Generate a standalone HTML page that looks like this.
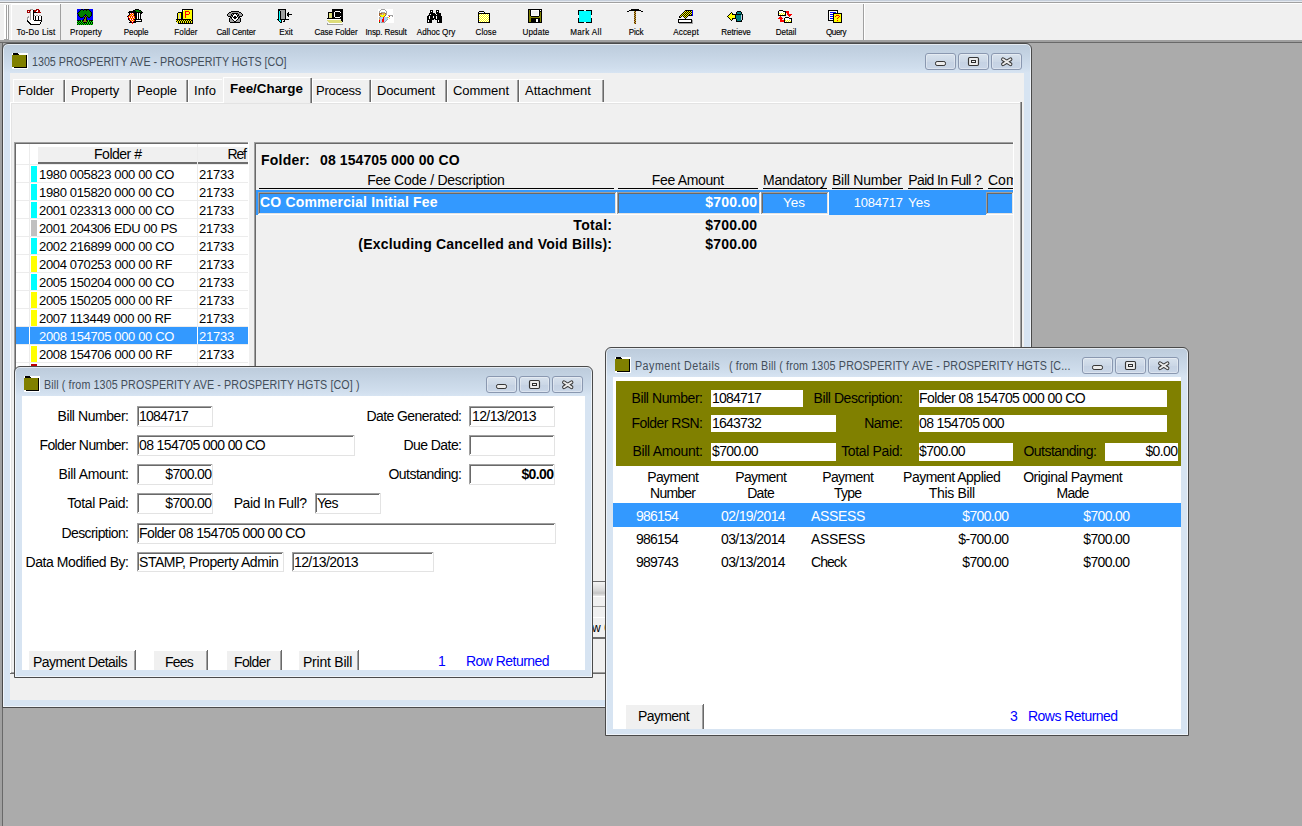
<!DOCTYPE html><html><head><meta charset="utf-8"><style>
html,body{margin:0;padding:0}
body{width:1302px;height:826px;position:relative;overflow:hidden;background:#ababab;font-family:"Liberation Sans",sans-serif}
.a{position:absolute}
.t{position:absolute;white-space:pre;font-family:"Liberation Sans",sans-serif}
.win{box-shadow:inset 0 0 0 1px rgba(255,255,255,0.6);border:1px solid #4a4a4a;border-radius:6px 6px 0 0;background:linear-gradient(#bccbdb 0px,#c4d3e3 10px,#d0deed 24px,#d7e4f2 29px,#d7e4f2 100%)}
.tbtn{box-sizing:border-box;width:31px;height:17px;border:1px solid #8a98b0;border-radius:3px;background:linear-gradient(#d8e2ed,#cbd7e6 50%,#c5d2e3 52%,#c9d6e7);box-shadow:inset 0 0 0 1px rgba(255,255,255,0.35)}
</style></head><body>

<div class="a" style="left:0px;top:0px;width:1302px;height:1px;background:#c5ceda;"></div>
<div class="a" style="left:0px;top:1px;width:1302px;height:1px;background:#e6eaf0;"></div>
<div class="a" style="left:0px;top:2px;width:1302px;height:1px;background:#a0a0a0;"></div>
<div class="a" style="left:0px;top:3px;width:1302px;height:37px;background:#f0f0f0;"></div>
<div class="a" style="left:0px;top:3px;width:1302px;height:1px;background:#ffffff;"></div>
<div class="a" style="left:0px;top:40px;width:1302px;height:2px;background:#a0a0a0;"></div>
<div class="a" style="left:0px;top:42px;width:1302px;height:1px;background:#696969;"></div>
<div class="a" style="left:4px;top:5px;width:2px;height:34px;background:#fff;"></div>
<div class="a" style="left:6px;top:5px;width:1px;height:34px;background:#a0a0a0;"></div>
<div class="a" style="left:7px;top:5px;width:1px;height:34px;background:#fff;"></div>
<div class="a" style="left:8px;top:5px;width:1px;height:34px;background:#a0a0a0;"></div>
<div class="a" style="left:4px;top:39px;width:5px;height:1px;background:#a0a0a0;"></div>
<div class="a" style="left:11px;top:4px;width:50px;height:1px;background:#fff;"></div>
<div class="a" style="left:11px;top:4px;width:1px;height:36px;background:#fff;"></div>
<div class="a" style="left:60px;top:4px;width:1px;height:37px;background:#a0a0a0;"></div>
<div class="a" style="left:11px;top:40px;width:50px;height:1px;background:#a0a0a0;"></div>
<div class="a" style="left:863px;top:4px;width:1px;height:36px;background:#a0a0a0;"></div>
<div class="a" style="left:864px;top:4px;width:1px;height:36px;background:#fff;"></div>
<div class="t" style="left:-263.833px;width:600px;text-align:center;top:27px;font-size:9.5px;line-height:9.5px;font-weight:normal;color:#000;letter-spacing:0.335px;transform:scaleX(0.85);transform-origin:50% 0;-webkit-text-stroke:0.15px #000;">To-Do List</div>
<div class="t" style="left:-213.901px;width:600px;text-align:center;top:27px;font-size:9.5px;line-height:9.5px;font-weight:normal;color:#000;letter-spacing:0.198px;transform:scaleX(0.85);transform-origin:50% 0;-webkit-text-stroke:0.15px #000;">Property</div>
<div class="t" style="left:-164.053px;width:600px;text-align:center;top:27px;font-size:9.5px;line-height:9.5px;font-weight:normal;color:#000;letter-spacing:-0.107px;transform:scaleX(0.85);transform-origin:50% 0;-webkit-text-stroke:0.15px #000;">People</div>
<div class="t" style="left:-113.964px;width:600px;text-align:center;top:27px;font-size:9.5px;line-height:9.5px;font-weight:normal;color:#000;letter-spacing:0.072px;transform:scaleX(0.85);transform-origin:50% 0;-webkit-text-stroke:0.15px #000;">Folder</div>
<div class="t" style="left:-64.063px;width:600px;text-align:center;top:27px;font-size:9.5px;line-height:9.5px;font-weight:normal;color:#000;letter-spacing:-0.126px;transform:scaleX(0.85);transform-origin:50% 0;-webkit-text-stroke:0.15px #000;">Call Center</div>
<div class="t" style="left:-13.989px;width:600px;text-align:center;top:27px;font-size:9.5px;line-height:9.5px;font-weight:normal;color:#000;letter-spacing:0.022px;transform:scaleX(0.85);transform-origin:50% 0;-webkit-text-stroke:0.15px #000;">Exit</div>
<div class="t" style="left:35.955px;width:600px;text-align:center;top:27px;font-size:9.5px;line-height:9.5px;font-weight:normal;color:#000;letter-spacing:-0.090px;transform:scaleX(0.85);transform-origin:50% 0;-webkit-text-stroke:0.15px #000;">Case Folder</div>
<div class="t" style="left:85.929px;width:600px;text-align:center;top:27px;font-size:9.5px;line-height:9.5px;font-weight:normal;color:#000;letter-spacing:-0.143px;transform:scaleX(0.85);transform-origin:50% 0;-webkit-text-stroke:0.15px #000;">Insp. Result</div>
<div class="t" style="left:136.018px;width:600px;text-align:center;top:27px;font-size:9.5px;line-height:9.5px;font-weight:normal;color:#000;letter-spacing:0.036px;transform:scaleX(0.85);transform-origin:50% 0;-webkit-text-stroke:0.15px #000;">Adhoc Qry</div>
<div class="t" style="left:186.025px;width:600px;text-align:center;top:27px;font-size:9.5px;line-height:9.5px;font-weight:normal;color:#000;letter-spacing:0.050px;transform:scaleX(0.85);transform-origin:50% 0;-webkit-text-stroke:0.15px #000;">Close</div>
<div class="t" style="left:236.101px;width:600px;text-align:center;top:27px;font-size:9.5px;line-height:9.5px;font-weight:normal;color:#000;letter-spacing:0.202px;transform:scaleX(0.85);transform-origin:50% 0;-webkit-text-stroke:0.15px #000;">Update</div>
<div class="t" style="left:286.218px;width:600px;text-align:center;top:27px;font-size:9.5px;line-height:9.5px;font-weight:normal;color:#000;letter-spacing:0.436px;transform:scaleX(0.85);transform-origin:50% 0;-webkit-text-stroke:0.15px #000;">Mark All</div>
<div class="t" style="left:335.902px;width:600px;text-align:center;top:27px;font-size:9.5px;line-height:9.5px;font-weight:normal;color:#000;letter-spacing:-0.197px;transform:scaleX(0.85);transform-origin:50% 0;-webkit-text-stroke:0.15px #000;">Pick</div>
<div class="t" style="left:386.086px;width:600px;text-align:center;top:27px;font-size:9.5px;line-height:9.5px;font-weight:normal;color:#000;letter-spacing:0.172px;transform:scaleX(0.85);transform-origin:50% 0;-webkit-text-stroke:0.15px #000;">Accept</div>
<div class="t" style="left:435.968px;width:600px;text-align:center;top:27px;font-size:9.5px;line-height:9.5px;font-weight:normal;color:#000;letter-spacing:-0.064px;transform:scaleX(0.85);transform-origin:50% 0;-webkit-text-stroke:0.15px #000;">Retrieve</div>
<div class="t" style="left:485.996px;width:600px;text-align:center;top:27px;font-size:9.5px;line-height:9.5px;font-weight:normal;color:#000;letter-spacing:-0.007px;transform:scaleX(0.85);transform-origin:50% 0;-webkit-text-stroke:0.15px #000;">Detail</div>
<div class="t" style="left:535.793px;width:600px;text-align:center;top:27px;font-size:9.5px;line-height:9.5px;font-weight:normal;color:#000;letter-spacing:-0.413px;transform:scaleX(0.85);transform-origin:50% 0;-webkit-text-stroke:0.15px #000;">Query</div>
<svg class="a" style="left:26px;top:8px" width="18" height="18" viewBox="0 0 18 18" shape-rendering="crispEdges"><rect x="4" y="1" width="3" height="1" fill="#a0a0a0"/><rect x="10" y="1" width="3" height="1" fill="#a00000"/><rect x="1" y="2" width="4" height="1" fill="#a00000"/><rect x="5" y="2" width="2" height="1" fill="#fff"/><rect x="7" y="2" width="1" height="1" fill="#000"/><rect x="8" y="2" width="3" height="1" fill="#a00000"/><rect x="11" y="2" width="1" height="1" fill="#fff"/><rect x="12" y="2" width="2" height="1" fill="#a00000"/><rect x="1" y="3" width="1" height="1" fill="#a00000"/><rect x="2" y="3" width="1" height="1" fill="#fff"/><rect x="3" y="3" width="1" height="1" fill="#a00000"/><rect x="4" y="3" width="1" height="1" fill="#a0a0a0"/><rect x="5" y="3" width="2" height="1" fill="#fff"/><rect x="7" y="3" width="1" height="1" fill="#000"/><rect x="8" y="3" width="2" height="1" fill="#a00000"/><rect x="10" y="3" width="2" height="1" fill="#fff"/><rect x="12" y="3" width="2" height="1" fill="#a00000"/><rect x="1" y="4" width="3" height="1" fill="#a00000"/><rect x="4" y="4" width="1" height="1" fill="#a0a0a0"/><rect x="5" y="4" width="2" height="1" fill="#fff"/><rect x="7" y="4" width="4" height="1" fill="#000"/><rect x="11" y="4" width="4" height="1" fill="#a00000"/><rect x="4" y="5" width="1" height="1" fill="#a0a0a0"/><rect x="5" y="5" width="2" height="1" fill="#fff"/><rect x="7" y="5" width="1" height="1" fill="#000"/><rect x="4" y="6" width="1" height="1" fill="#a0a0a0"/><rect x="5" y="6" width="2" height="1" fill="#fff"/><rect x="7" y="6" width="1" height="1" fill="#000"/><rect x="4" y="7" width="1" height="1" fill="#a0a0a0"/><rect x="5" y="7" width="2" height="1" fill="#fff"/><rect x="7" y="7" width="1" height="1" fill="#000"/><rect x="8" y="7" width="1" height="1" fill="#a0a0a0"/><rect x="9" y="7" width="1" height="1" fill="#fff"/><rect x="10" y="7" width="2" height="1" fill="#a0a0a0"/><rect x="12" y="7" width="1" height="1" fill="#fff"/><rect x="13" y="7" width="2" height="1" fill="#a0a0a0"/><rect x="2" y="8" width="1" height="1" fill="#a0a0a0"/><rect x="4" y="8" width="1" height="1" fill="#a0a0a0"/><rect x="5" y="8" width="2" height="1" fill="#fff"/><rect x="7" y="8" width="1" height="1" fill="#000"/><rect x="8" y="8" width="1" height="1" fill="#fff"/><rect x="9" y="8" width="1" height="1" fill="#000"/><rect x="10" y="8" width="2" height="1" fill="#fff"/><rect x="12" y="8" width="1" height="1" fill="#000"/><rect x="13" y="8" width="2" height="1" fill="#fff"/><rect x="15" y="8" width="1" height="1" fill="#000"/><rect x="1" y="9" width="2" height="1" fill="#a0a0a0"/><rect x="4" y="9" width="1" height="1" fill="#a0a0a0"/><rect x="5" y="9" width="2" height="1" fill="#fff"/><rect x="7" y="9" width="1" height="1" fill="#000"/><rect x="8" y="9" width="1" height="1" fill="#fff"/><rect x="9" y="9" width="1" height="1" fill="#000"/><rect x="10" y="9" width="2" height="1" fill="#fff"/><rect x="12" y="9" width="1" height="1" fill="#000"/><rect x="13" y="9" width="2" height="1" fill="#fff"/><rect x="15" y="9" width="1" height="1" fill="#000"/><rect x="1" y="10" width="1" height="1" fill="#a0a0a0"/><rect x="2" y="10" width="1" height="1" fill="#fff"/><rect x="4" y="10" width="1" height="1" fill="#a0a0a0"/><rect x="5" y="10" width="2" height="1" fill="#fff"/><rect x="7" y="10" width="1" height="1" fill="#000"/><rect x="8" y="10" width="1" height="1" fill="#fff"/><rect x="9" y="10" width="1" height="1" fill="#000"/><rect x="10" y="10" width="2" height="1" fill="#fff"/><rect x="12" y="10" width="1" height="1" fill="#000"/><rect x="13" y="10" width="2" height="1" fill="#fff"/><rect x="15" y="10" width="1" height="1" fill="#000"/><rect x="1" y="11" width="1" height="1" fill="#a0a0a0"/><rect x="2" y="11" width="1" height="1" fill="#fff"/><rect x="4" y="11" width="1" height="1" fill="#a0a0a0"/><rect x="5" y="11" width="2" height="1" fill="#fff"/><rect x="7" y="11" width="1" height="1" fill="#000"/><rect x="8" y="11" width="1" height="1" fill="#fff"/><rect x="9" y="11" width="1" height="1" fill="#000"/><rect x="10" y="11" width="2" height="1" fill="#fff"/><rect x="12" y="11" width="1" height="1" fill="#000"/><rect x="13" y="11" width="2" height="1" fill="#fff"/><rect x="15" y="11" width="1" height="1" fill="#000"/><rect x="1" y="12" width="1" height="1" fill="#000"/><rect x="2" y="12" width="1" height="1" fill="#fff"/><rect x="5" y="12" width="3" height="1" fill="#fff"/><rect x="8" y="12" width="8" height="1" fill="#000"/><rect x="1" y="13" width="2" height="1" fill="#000"/><rect x="3" y="13" width="12" height="1" fill="#fff"/><rect x="15" y="13" width="1" height="1" fill="#000"/><rect x="2" y="14" width="2" height="1" fill="#000"/><rect x="4" y="14" width="10" height="1" fill="#fff"/><rect x="14" y="14" width="1" height="1" fill="#000"/><rect x="3" y="15" width="2" height="1" fill="#000"/><rect x="5" y="15" width="9" height="1" fill="#fff"/><rect x="14" y="15" width="1" height="1" fill="#000"/><rect x="4" y="16" width="10" height="1" fill="#000"/></svg>
<svg class="a" style="left:76px;top:8px" width="18" height="18" viewBox="0 0 18 18" shape-rendering="crispEdges"><rect x="1" y="1" width="4" height="1" fill="#0000ff"/><rect x="5" y="1" width="2" height="1" fill="#000"/><rect x="7" y="1" width="1" height="1" fill="#0000ff"/><rect x="8" y="1" width="5" height="1" fill="#000"/><rect x="13" y="1" width="4" height="1" fill="#0000ff"/><rect x="1" y="2" width="3" height="1" fill="#0000ff"/><rect x="4" y="2" width="1" height="1" fill="#000"/><rect x="5" y="2" width="2" height="1" fill="#008000"/><rect x="7" y="2" width="1" height="1" fill="#000"/><rect x="8" y="2" width="2" height="1" fill="#008000"/><rect x="10" y="2" width="1" height="1" fill="#000"/><rect x="11" y="2" width="2" height="1" fill="#008000"/><rect x="13" y="2" width="1" height="1" fill="#000"/><rect x="14" y="2" width="3" height="1" fill="#0000ff"/><rect x="1" y="3" width="2" height="1" fill="#0000ff"/><rect x="3" y="3" width="1" height="1" fill="#000"/><rect x="4" y="3" width="10" height="1" fill="#008000"/><rect x="14" y="3" width="1" height="1" fill="#000"/><rect x="15" y="3" width="2" height="1" fill="#0000ff"/><rect x="1" y="4" width="1" height="1" fill="#0000ff"/><rect x="2" y="4" width="1" height="1" fill="#000"/><rect x="3" y="4" width="12" height="1" fill="#008000"/><rect x="15" y="4" width="1" height="1" fill="#000"/><rect x="16" y="4" width="1" height="1" fill="#0000ff"/><rect x="1" y="5" width="1" height="1" fill="#000"/><rect x="2" y="5" width="13" height="1" fill="#008000"/><rect x="15" y="5" width="1" height="1" fill="#000"/><rect x="16" y="5" width="1" height="1" fill="#0000ff"/><rect x="1" y="6" width="1" height="1" fill="#0000ff"/><rect x="2" y="6" width="1" height="1" fill="#000"/><rect x="3" y="6" width="6" height="1" fill="#008000"/><rect x="9" y="6" width="1" height="1" fill="#000"/><rect x="10" y="6" width="5" height="1" fill="#008000"/><rect x="15" y="6" width="1" height="1" fill="#000"/><rect x="16" y="6" width="1" height="1" fill="#0000ff"/><rect x="1" y="7" width="1" height="1" fill="#0000ff"/><rect x="2" y="7" width="1" height="1" fill="#000"/><rect x="3" y="7" width="5" height="1" fill="#008000"/><rect x="8" y="7" width="1" height="1" fill="#000"/><rect x="9" y="7" width="1" height="1" fill="#0000ff"/><rect x="10" y="7" width="1" height="1" fill="#000"/><rect x="11" y="7" width="4" height="1" fill="#008000"/><rect x="15" y="7" width="1" height="1" fill="#000"/><rect x="16" y="7" width="1" height="1" fill="#0000ff"/><rect x="1" y="8" width="2" height="1" fill="#0000ff"/><rect x="3" y="8" width="1" height="1" fill="#000"/><rect x="4" y="8" width="3" height="1" fill="#008000"/><rect x="7" y="8" width="1" height="1" fill="#000"/><rect x="8" y="8" width="1" height="1" fill="#808000"/><rect x="9" y="8" width="1" height="1" fill="#000"/><rect x="10" y="8" width="1" height="1" fill="#808000"/><rect x="11" y="8" width="1" height="1" fill="#000"/><rect x="12" y="8" width="2" height="1" fill="#008000"/><rect x="14" y="8" width="1" height="1" fill="#000"/><rect x="15" y="8" width="2" height="1" fill="#0000ff"/><rect x="1" y="9" width="3" height="1" fill="#0000ff"/><rect x="4" y="9" width="3" height="1" fill="#000"/><rect x="7" y="9" width="1" height="1" fill="#0000ff"/><rect x="8" y="9" width="1" height="1" fill="#000"/><rect x="9" y="9" width="1" height="1" fill="#808000"/><rect x="10" y="9" width="1" height="1" fill="#000"/><rect x="11" y="9" width="1" height="1" fill="#0000ff"/><rect x="12" y="9" width="2" height="1" fill="#000"/><rect x="14" y="9" width="3" height="1" fill="#0000ff"/><rect x="1" y="10" width="7" height="1" fill="#0000ff"/><rect x="8" y="10" width="1" height="1" fill="#000"/><rect x="9" y="10" width="1" height="1" fill="#808000"/><rect x="10" y="10" width="1" height="1" fill="#000"/><rect x="11" y="10" width="6" height="1" fill="#0000ff"/><rect x="1" y="11" width="6" height="1" fill="#0000ff"/><rect x="7" y="11" width="1" height="1" fill="#000"/><rect x="8" y="11" width="2" height="1" fill="#808000"/><rect x="10" y="11" width="1" height="1" fill="#000"/><rect x="11" y="11" width="6" height="1" fill="#0000ff"/><rect x="1" y="12" width="4" height="1" fill="#000"/><rect x="5" y="12" width="1" height="1" fill="#00ff00"/><rect x="6" y="12" width="2" height="1" fill="#000"/><rect x="8" y="12" width="2" height="1" fill="#808000"/><rect x="10" y="12" width="2" height="1" fill="#000"/><rect x="12" y="12" width="1" height="1" fill="#00ff00"/><rect x="13" y="12" width="4" height="1" fill="#000"/><rect x="1" y="13" width="1" height="1" fill="#00ff00"/><rect x="2" y="13" width="1" height="1" fill="#000"/><rect x="3" y="13" width="1" height="1" fill="#00ff00"/><rect x="4" y="13" width="1" height="1" fill="#000"/><rect x="5" y="13" width="1" height="1" fill="#00ff00"/><rect x="6" y="13" width="1" height="1" fill="#000"/><rect x="7" y="13" width="4" height="1" fill="#808000"/><rect x="11" y="13" width="1" height="1" fill="#000"/><rect x="12" y="13" width="1" height="1" fill="#00ff00"/><rect x="13" y="13" width="1" height="1" fill="#000"/><rect x="14" y="13" width="1" height="1" fill="#00ff00"/><rect x="15" y="13" width="1" height="1" fill="#000"/><rect x="16" y="13" width="1" height="1" fill="#00ff00"/><rect x="1" y="14" width="1" height="1" fill="#000"/><rect x="2" y="14" width="1" height="1" fill="#00ff00"/><rect x="3" y="14" width="1" height="1" fill="#000"/><rect x="4" y="14" width="1" height="1" fill="#00ff00"/><rect x="5" y="14" width="1" height="1" fill="#000"/><rect x="6" y="14" width="1" height="1" fill="#00ff00"/><rect x="7" y="14" width="4" height="1" fill="#000"/><rect x="11" y="14" width="1" height="1" fill="#00ff00"/><rect x="12" y="14" width="1" height="1" fill="#000"/><rect x="13" y="14" width="1" height="1" fill="#00ff00"/><rect x="14" y="14" width="1" height="1" fill="#000"/><rect x="15" y="14" width="1" height="1" fill="#00ff00"/><rect x="16" y="14" width="1" height="1" fill="#000"/><rect x="1" y="15" width="1" height="1" fill="#00ff00"/><rect x="2" y="15" width="1" height="1" fill="#000"/><rect x="3" y="15" width="1" height="1" fill="#00ff00"/><rect x="4" y="15" width="1" height="1" fill="#000"/><rect x="5" y="15" width="1" height="1" fill="#00ff00"/><rect x="6" y="15" width="1" height="1" fill="#000"/><rect x="7" y="15" width="1" height="1" fill="#00ff00"/><rect x="8" y="15" width="1" height="1" fill="#000"/><rect x="9" y="15" width="1" height="1" fill="#00ff00"/><rect x="10" y="15" width="1" height="1" fill="#000"/><rect x="11" y="15" width="1" height="1" fill="#00ff00"/><rect x="12" y="15" width="1" height="1" fill="#000"/><rect x="13" y="15" width="1" height="1" fill="#00ff00"/><rect x="14" y="15" width="1" height="1" fill="#000"/><rect x="15" y="15" width="1" height="1" fill="#00ff00"/><rect x="16" y="15" width="1" height="1" fill="#000"/><rect x="1" y="16" width="1" height="1" fill="#000"/><rect x="2" y="16" width="1" height="1" fill="#00ff00"/><rect x="3" y="16" width="1" height="1" fill="#000"/><rect x="4" y="16" width="1" height="1" fill="#00ff00"/><rect x="5" y="16" width="1" height="1" fill="#000"/><rect x="6" y="16" width="1" height="1" fill="#00ff00"/><rect x="7" y="16" width="1" height="1" fill="#000"/><rect x="8" y="16" width="1" height="1" fill="#00ff00"/><rect x="9" y="16" width="1" height="1" fill="#000"/><rect x="10" y="16" width="1" height="1" fill="#00ff00"/><rect x="11" y="16" width="1" height="1" fill="#000"/><rect x="12" y="16" width="1" height="1" fill="#00ff00"/><rect x="13" y="16" width="1" height="1" fill="#000"/><rect x="14" y="16" width="1" height="1" fill="#00ff00"/><rect x="15" y="16" width="1" height="1" fill="#000"/><rect x="16" y="16" width="1" height="1" fill="#00ff00"/></svg>
<svg class="a" style="left:126px;top:8px" width="18" height="18" viewBox="0 0 18 18" shape-rendering="crispEdges"><rect x="9" y="1" width="4" height="1" fill="#000"/><rect x="7" y="2" width="2" height="1" fill="#000"/><rect x="9" y="2" width="4" height="1" fill="#008000"/><rect x="13" y="2" width="2" height="1" fill="#000"/><rect x="3" y="3" width="7" height="1" fill="#000"/><rect x="10" y="3" width="5" height="1" fill="#008000"/><rect x="15" y="3" width="1" height="1" fill="#000"/><rect x="2" y="4" width="15" height="1" fill="#000"/><rect x="3" y="5" width="1" height="1" fill="#000"/><rect x="4" y="5" width="1" height="1" fill="#fff"/><rect x="5" y="5" width="1" height="1" fill="#ff0000"/><rect x="6" y="5" width="1" height="1" fill="#fff"/><rect x="7" y="5" width="1" height="1" fill="#ff0000"/><rect x="8" y="5" width="3" height="1" fill="#000"/><rect x="11" y="5" width="1" height="1" fill="#fff"/><rect x="12" y="5" width="1" height="1" fill="#000"/><rect x="13" y="5" width="1" height="1" fill="#fff"/><rect x="14" y="5" width="2" height="1" fill="#000"/><rect x="3" y="6" width="1" height="1" fill="#000"/><rect x="4" y="6" width="1" height="1" fill="#ff0000"/><rect x="5" y="6" width="1" height="1" fill="#ffff00"/><rect x="6" y="6" width="1" height="1" fill="#ff0000"/><rect x="7" y="6" width="1" height="1" fill="#ffff00"/><rect x="8" y="6" width="3" height="1" fill="#000"/><rect x="11" y="6" width="1" height="1" fill="#fff"/><rect x="12" y="6" width="1" height="1" fill="#000"/><rect x="13" y="6" width="1" height="1" fill="#fff"/><rect x="14" y="6" width="1" height="1" fill="#000"/><rect x="2" y="7" width="1" height="1" fill="#000"/><rect x="3" y="7" width="1" height="1" fill="#ff0000"/><rect x="4" y="7" width="1" height="1" fill="#ffff00"/><rect x="5" y="7" width="1" height="1" fill="#ff0000"/><rect x="6" y="7" width="1" height="1" fill="#fff"/><rect x="7" y="7" width="1" height="1" fill="#ff0000"/><rect x="8" y="7" width="3" height="1" fill="#000"/><rect x="11" y="7" width="1" height="1" fill="#fff"/><rect x="12" y="7" width="1" height="1" fill="#000"/><rect x="13" y="7" width="1" height="1" fill="#fff"/><rect x="14" y="7" width="1" height="1" fill="#000"/><rect x="1" y="8" width="1" height="1" fill="#000"/><rect x="2" y="8" width="1" height="1" fill="#ff0000"/><rect x="3" y="8" width="1" height="1" fill="#ffff00"/><rect x="4" y="8" width="1" height="1" fill="#ff0000"/><rect x="5" y="8" width="1" height="1" fill="#ffff00"/><rect x="6" y="8" width="1" height="1" fill="#ff0000"/><rect x="7" y="8" width="1" height="1" fill="#ffff00"/><rect x="8" y="8" width="1" height="1" fill="#ff0000"/><rect x="9" y="8" width="2" height="1" fill="#000"/><rect x="11" y="8" width="1" height="1" fill="#fff"/><rect x="12" y="8" width="1" height="1" fill="#000"/><rect x="13" y="8" width="1" height="1" fill="#fff"/><rect x="14" y="8" width="1" height="1" fill="#000"/><rect x="2" y="9" width="1" height="1" fill="#ff0000"/><rect x="3" y="9" width="1" height="1" fill="#fff"/><rect x="4" y="9" width="1" height="1" fill="#ff0000"/><rect x="5" y="9" width="1" height="1" fill="#fff"/><rect x="6" y="9" width="1" height="1" fill="#ff0000"/><rect x="7" y="9" width="1" height="1" fill="#fff"/><rect x="8" y="9" width="1" height="1" fill="#ff0000"/><rect x="9" y="9" width="2" height="1" fill="#000"/><rect x="11" y="9" width="1" height="1" fill="#fff"/><rect x="12" y="9" width="1" height="1" fill="#000"/><rect x="13" y="9" width="1" height="1" fill="#fff"/><rect x="14" y="9" width="1" height="1" fill="#000"/><rect x="2" y="10" width="1" height="1" fill="#000"/><rect x="3" y="10" width="1" height="1" fill="#ff0000"/><rect x="4" y="10" width="1" height="1" fill="#ffff00"/><rect x="5" y="10" width="1" height="1" fill="#ff0000"/><rect x="6" y="10" width="1" height="1" fill="#ffff00"/><rect x="7" y="10" width="1" height="1" fill="#ff0000"/><rect x="8" y="10" width="1" height="1" fill="#ffff00"/><rect x="9" y="10" width="2" height="1" fill="#000"/><rect x="11" y="10" width="1" height="1" fill="#fff"/><rect x="12" y="10" width="1" height="1" fill="#000"/><rect x="13" y="10" width="1" height="1" fill="#fff"/><rect x="14" y="10" width="1" height="1" fill="#000"/><rect x="2" y="11" width="1" height="1" fill="#000"/><rect x="3" y="11" width="1" height="1" fill="#ff0000"/><rect x="4" y="11" width="1" height="1" fill="#fff"/><rect x="5" y="11" width="1" height="1" fill="#ff0000"/><rect x="6" y="11" width="1" height="1" fill="#fff"/><rect x="7" y="11" width="1" height="1" fill="#ff0000"/><rect x="8" y="11" width="8" height="1" fill="#000"/><rect x="3" y="12" width="1" height="1" fill="#000"/><rect x="4" y="12" width="1" height="1" fill="#ff0000"/><rect x="5" y="12" width="1" height="1" fill="#ffff00"/><rect x="6" y="12" width="1" height="1" fill="#ff0000"/><rect x="7" y="12" width="1" height="1" fill="#ffff00"/><rect x="8" y="12" width="1" height="1" fill="#ff0000"/><rect x="9" y="12" width="1" height="1" fill="#000"/><rect x="10" y="12" width="5" height="1" fill="#fff"/><rect x="15" y="12" width="1" height="1" fill="#000"/><rect x="4" y="13" width="1" height="1" fill="#000"/><rect x="5" y="13" width="1" height="1" fill="#ff0000"/><rect x="6" y="13" width="1" height="1" fill="#fff"/><rect x="7" y="13" width="1" height="1" fill="#ff0000"/><rect x="8" y="13" width="8" height="1" fill="#000"/><rect x="3" y="14" width="3" height="1" fill="#000"/><rect x="6" y="14" width="1" height="1" fill="#ff0000"/><rect x="7" y="14" width="3" height="1" fill="#000"/><rect x="6" y="15" width="1" height="1" fill="#ff0000"/></svg>
<svg class="a" style="left:176px;top:8px" width="18" height="18" viewBox="0 0 18 18" shape-rendering="crispEdges"><rect x="6" y="1" width="11" height="1" fill="#000"/><rect x="6" y="2" width="1" height="1" fill="#000"/><rect x="7" y="2" width="1" height="1" fill="#fff"/><rect x="8" y="2" width="8" height="1" fill="#ffff00"/><rect x="16" y="2" width="1" height="1" fill="#000"/><rect x="6" y="3" width="1" height="1" fill="#000"/><rect x="7" y="3" width="2" height="1" fill="#ffff00"/><rect x="9" y="3" width="4" height="1" fill="#ff0000"/><rect x="13" y="3" width="3" height="1" fill="#ffff00"/><rect x="16" y="3" width="1" height="1" fill="#000"/><rect x="2" y="4" width="5" height="1" fill="#000"/><rect x="7" y="4" width="2" height="1" fill="#ffff00"/><rect x="9" y="4" width="1" height="1" fill="#ff0000"/><rect x="10" y="4" width="3" height="1" fill="#ffff00"/><rect x="13" y="4" width="1" height="1" fill="#ff0000"/><rect x="14" y="4" width="2" height="1" fill="#ffff00"/><rect x="16" y="4" width="1" height="1" fill="#000"/><rect x="1" y="5" width="1" height="1" fill="#000"/><rect x="2" y="5" width="3" height="1" fill="#ffff00"/><rect x="5" y="5" width="2" height="1" fill="#000"/><rect x="7" y="5" width="2" height="1" fill="#ffff00"/><rect x="9" y="5" width="1" height="1" fill="#ff0000"/><rect x="10" y="5" width="3" height="1" fill="#ffff00"/><rect x="13" y="5" width="1" height="1" fill="#ff0000"/><rect x="14" y="5" width="2" height="1" fill="#ffff00"/><rect x="16" y="5" width="1" height="1" fill="#000"/><rect x="1" y="6" width="1" height="1" fill="#000"/><rect x="2" y="6" width="1" height="1" fill="#ffff00"/><rect x="3" y="6" width="1" height="1" fill="#c8c8e0"/><rect x="4" y="6" width="1" height="1" fill="#ffff00"/><rect x="5" y="6" width="2" height="1" fill="#000"/><rect x="7" y="6" width="2" height="1" fill="#ffff00"/><rect x="9" y="6" width="4" height="1" fill="#ff0000"/><rect x="13" y="6" width="3" height="1" fill="#ffff00"/><rect x="16" y="6" width="1" height="1" fill="#000"/><rect x="1" y="7" width="1" height="1" fill="#000"/><rect x="2" y="7" width="1" height="1" fill="#ffff00"/><rect x="3" y="7" width="1" height="1" fill="#c8c8e0"/><rect x="4" y="7" width="1" height="1" fill="#ffff00"/><rect x="5" y="7" width="2" height="1" fill="#000"/><rect x="7" y="7" width="2" height="1" fill="#ffff00"/><rect x="9" y="7" width="1" height="1" fill="#ff0000"/><rect x="10" y="7" width="6" height="1" fill="#ffff00"/><rect x="16" y="7" width="1" height="1" fill="#000"/><rect x="1" y="8" width="1" height="1" fill="#000"/><rect x="2" y="8" width="1" height="1" fill="#ffff00"/><rect x="3" y="8" width="1" height="1" fill="#c8c8e0"/><rect x="4" y="8" width="1" height="1" fill="#ffff00"/><rect x="5" y="8" width="2" height="1" fill="#000"/><rect x="7" y="8" width="2" height="1" fill="#ffff00"/><rect x="9" y="8" width="1" height="1" fill="#ff0000"/><rect x="10" y="8" width="6" height="1" fill="#ffff00"/><rect x="16" y="8" width="1" height="1" fill="#000"/><rect x="1" y="9" width="1" height="1" fill="#000"/><rect x="2" y="9" width="1" height="1" fill="#ffff00"/><rect x="3" y="9" width="1" height="1" fill="#c8c8e0"/><rect x="4" y="9" width="1" height="1" fill="#ffff00"/><rect x="5" y="9" width="2" height="1" fill="#000"/><rect x="7" y="9" width="2" height="1" fill="#ffff00"/><rect x="9" y="9" width="1" height="1" fill="#ff0000"/><rect x="10" y="9" width="6" height="1" fill="#ffff00"/><rect x="16" y="9" width="1" height="1" fill="#000"/><rect x="1" y="10" width="1" height="1" fill="#000"/><rect x="2" y="10" width="1" height="1" fill="#ffff00"/><rect x="3" y="10" width="2" height="1" fill="#c8c8e0"/><rect x="5" y="10" width="2" height="1" fill="#000"/><rect x="7" y="10" width="9" height="1" fill="#ffff00"/><rect x="16" y="10" width="1" height="1" fill="#000"/><rect x="0" y="11" width="15" height="1" fill="#000"/><rect x="15" y="11" width="1" height="1" fill="#ffff00"/><rect x="16" y="11" width="1" height="1" fill="#000"/><rect x="0" y="12" width="1" height="1" fill="#ffff00"/><rect x="1" y="12" width="1" height="1" fill="#000"/><rect x="2" y="12" width="1" height="1" fill="#ffff00"/><rect x="3" y="12" width="1" height="1" fill="#000"/><rect x="4" y="12" width="1" height="1" fill="#ffff00"/><rect x="5" y="12" width="1" height="1" fill="#000"/><rect x="6" y="12" width="1" height="1" fill="#ffff00"/><rect x="7" y="12" width="1" height="1" fill="#000"/><rect x="8" y="12" width="1" height="1" fill="#ffff00"/><rect x="9" y="12" width="1" height="1" fill="#000"/><rect x="10" y="12" width="1" height="1" fill="#ffff00"/><rect x="11" y="12" width="1" height="1" fill="#000"/><rect x="12" y="12" width="1" height="1" fill="#ffff00"/><rect x="13" y="12" width="1" height="1" fill="#000"/><rect x="14" y="12" width="1" height="1" fill="#ffff00"/><rect x="15" y="12" width="2" height="1" fill="#000"/><rect x="0" y="13" width="1" height="1" fill="#000"/><rect x="1" y="13" width="1" height="1" fill="#ffff00"/><rect x="2" y="13" width="1" height="1" fill="#000"/><rect x="3" y="13" width="1" height="1" fill="#ffff00"/><rect x="4" y="13" width="1" height="1" fill="#000"/><rect x="5" y="13" width="1" height="1" fill="#ffff00"/><rect x="6" y="13" width="1" height="1" fill="#000"/><rect x="7" y="13" width="1" height="1" fill="#ffff00"/><rect x="8" y="13" width="1" height="1" fill="#000"/><rect x="9" y="13" width="1" height="1" fill="#ffff00"/><rect x="10" y="13" width="1" height="1" fill="#000"/><rect x="11" y="13" width="1" height="1" fill="#ffff00"/><rect x="12" y="13" width="1" height="1" fill="#000"/><rect x="13" y="13" width="1" height="1" fill="#ffff00"/><rect x="14" y="13" width="1" height="1" fill="#000"/><rect x="15" y="13" width="1" height="1" fill="#ffff00"/><rect x="16" y="13" width="1" height="1" fill="#000"/><rect x="1" y="14" width="1" height="1" fill="#ffff00"/><rect x="2" y="14" width="1" height="1" fill="#000"/><rect x="3" y="14" width="1" height="1" fill="#ffff00"/><rect x="4" y="14" width="1" height="1" fill="#000"/><rect x="5" y="14" width="1" height="1" fill="#ffff00"/><rect x="6" y="14" width="1" height="1" fill="#000"/><rect x="7" y="14" width="1" height="1" fill="#ffff00"/><rect x="8" y="14" width="1" height="1" fill="#000"/><rect x="9" y="14" width="1" height="1" fill="#ffff00"/><rect x="10" y="14" width="1" height="1" fill="#000"/><rect x="11" y="14" width="1" height="1" fill="#ffff00"/><rect x="12" y="14" width="1" height="1" fill="#000"/><rect x="13" y="14" width="1" height="1" fill="#ffff00"/><rect x="14" y="14" width="1" height="1" fill="#000"/><rect x="15" y="14" width="1" height="1" fill="#ffff00"/><rect x="16" y="14" width="1" height="1" fill="#000"/><rect x="2" y="15" width="15" height="1" fill="#000"/></svg>
<svg class="a" style="left:226px;top:8px" width="18" height="18" viewBox="0 0 18 18" shape-rendering="crispEdges"><rect x="5" y="3" width="8" height="1" fill="#000"/><rect x="3" y="4" width="2" height="1" fill="#000"/><rect x="5" y="4" width="8" height="1" fill="#a0a0a0"/><rect x="13" y="4" width="2" height="1" fill="#000"/><rect x="2" y="5" width="1" height="1" fill="#000"/><rect x="3" y="5" width="3" height="1" fill="#a0a0a0"/><rect x="6" y="5" width="6" height="1" fill="#000"/><rect x="12" y="5" width="3" height="1" fill="#a0a0a0"/><rect x="15" y="5" width="1" height="1" fill="#000"/><rect x="1" y="6" width="1" height="1" fill="#000"/><rect x="2" y="6" width="3" height="1" fill="#a0a0a0"/><rect x="5" y="6" width="1" height="1" fill="#000"/><rect x="6" y="6" width="1" height="1" fill="#a0a0a0"/><rect x="7" y="6" width="1" height="1" fill="#000"/><rect x="8" y="6" width="2" height="1" fill="#fff"/><rect x="10" y="6" width="1" height="1" fill="#000"/><rect x="11" y="6" width="1" height="1" fill="#a0a0a0"/><rect x="12" y="6" width="1" height="1" fill="#000"/><rect x="13" y="6" width="3" height="1" fill="#a0a0a0"/><rect x="16" y="6" width="1" height="1" fill="#000"/><rect x="1" y="7" width="1" height="1" fill="#000"/><rect x="2" y="7" width="3" height="1" fill="#a0a0a0"/><rect x="5" y="7" width="2" height="1" fill="#000"/><rect x="7" y="7" width="4" height="1" fill="#fff"/><rect x="11" y="7" width="2" height="1" fill="#000"/><rect x="13" y="7" width="3" height="1" fill="#a0a0a0"/><rect x="16" y="7" width="1" height="1" fill="#000"/><rect x="2" y="8" width="3" height="1" fill="#000"/><rect x="5" y="8" width="1" height="1" fill="#a0a0a0"/><rect x="6" y="8" width="1" height="1" fill="#000"/><rect x="7" y="8" width="1" height="1" fill="#fff"/><rect x="8" y="8" width="2" height="1" fill="#000"/><rect x="10" y="8" width="1" height="1" fill="#fff"/><rect x="11" y="8" width="1" height="1" fill="#000"/><rect x="12" y="8" width="1" height="1" fill="#a0a0a0"/><rect x="13" y="8" width="3" height="1" fill="#000"/><rect x="4" y="9" width="2" height="1" fill="#000"/><rect x="6" y="9" width="1" height="1" fill="#fff"/><rect x="7" y="9" width="4" height="1" fill="#000"/><rect x="11" y="9" width="1" height="1" fill="#fff"/><rect x="12" y="9" width="2" height="1" fill="#000"/><rect x="3" y="10" width="1" height="1" fill="#000"/><rect x="4" y="10" width="1" height="1" fill="#a0a0a0"/><rect x="5" y="10" width="1" height="1" fill="#000"/><rect x="6" y="10" width="2" height="1" fill="#fff"/><rect x="8" y="10" width="2" height="1" fill="#000"/><rect x="10" y="10" width="2" height="1" fill="#fff"/><rect x="12" y="10" width="1" height="1" fill="#000"/><rect x="13" y="10" width="1" height="1" fill="#a0a0a0"/><rect x="14" y="10" width="1" height="1" fill="#000"/><rect x="3" y="11" width="1" height="1" fill="#000"/><rect x="4" y="11" width="2" height="1" fill="#a0a0a0"/><rect x="6" y="11" width="1" height="1" fill="#000"/><rect x="7" y="11" width="4" height="1" fill="#fff"/><rect x="11" y="11" width="1" height="1" fill="#000"/><rect x="12" y="11" width="2" height="1" fill="#a0a0a0"/><rect x="14" y="11" width="1" height="1" fill="#000"/><rect x="3" y="12" width="1" height="1" fill="#000"/><rect x="4" y="12" width="3" height="1" fill="#a0a0a0"/><rect x="7" y="12" width="1" height="1" fill="#000"/><rect x="8" y="12" width="2" height="1" fill="#fff"/><rect x="10" y="12" width="1" height="1" fill="#000"/><rect x="11" y="12" width="3" height="1" fill="#a0a0a0"/><rect x="14" y="12" width="1" height="1" fill="#000"/><rect x="3" y="13" width="1" height="1" fill="#000"/><rect x="4" y="13" width="4" height="1" fill="#a0a0a0"/><rect x="8" y="13" width="2" height="1" fill="#000"/><rect x="10" y="13" width="4" height="1" fill="#a0a0a0"/><rect x="14" y="13" width="1" height="1" fill="#000"/><rect x="4" y="14" width="10" height="1" fill="#000"/></svg>
<svg class="a" style="left:276px;top:8px" width="18" height="18" viewBox="0 0 18 18" shape-rendering="crispEdges"><rect x="2" y="1" width="8" height="1" fill="#000"/><rect x="2" y="2" width="2" height="1" fill="#000"/><rect x="4" y="2" width="5" height="1" fill="#a0a0a0"/><rect x="9" y="2" width="1" height="1" fill="#000"/><rect x="2" y="3" width="1" height="1" fill="#000"/><rect x="3" y="3" width="1" height="1" fill="#00ffff"/><rect x="4" y="3" width="1" height="1" fill="#000"/><rect x="5" y="3" width="4" height="1" fill="#a0a0a0"/><rect x="9" y="3" width="1" height="1" fill="#000"/><rect x="2" y="4" width="1" height="1" fill="#000"/><rect x="3" y="4" width="1" height="1" fill="#00ffff"/><rect x="4" y="4" width="1" height="1" fill="#000"/><rect x="5" y="4" width="4" height="1" fill="#a0a0a0"/><rect x="9" y="4" width="1" height="1" fill="#000"/><rect x="12" y="4" width="1" height="1" fill="#000"/><rect x="2" y="5" width="1" height="1" fill="#000"/><rect x="3" y="5" width="1" height="1" fill="#00ffff"/><rect x="4" y="5" width="1" height="1" fill="#000"/><rect x="5" y="5" width="4" height="1" fill="#a0a0a0"/><rect x="9" y="5" width="1" height="1" fill="#000"/><rect x="11" y="5" width="2" height="1" fill="#000"/><rect x="2" y="6" width="1" height="1" fill="#000"/><rect x="3" y="6" width="1" height="1" fill="#00ffff"/><rect x="4" y="6" width="1" height="1" fill="#000"/><rect x="5" y="6" width="4" height="1" fill="#a0a0a0"/><rect x="9" y="6" width="1" height="1" fill="#000"/><rect x="11" y="6" width="5" height="1" fill="#000"/><rect x="2" y="7" width="1" height="1" fill="#000"/><rect x="3" y="7" width="1" height="1" fill="#00ffff"/><rect x="4" y="7" width="1" height="1" fill="#000"/><rect x="5" y="7" width="4" height="1" fill="#a0a0a0"/><rect x="9" y="7" width="1" height="1" fill="#000"/><rect x="11" y="7" width="2" height="1" fill="#000"/><rect x="2" y="8" width="1" height="1" fill="#000"/><rect x="3" y="8" width="1" height="1" fill="#00ffff"/><rect x="4" y="8" width="1" height="1" fill="#000"/><rect x="5" y="8" width="4" height="1" fill="#a0a0a0"/><rect x="9" y="8" width="1" height="1" fill="#000"/><rect x="12" y="8" width="1" height="1" fill="#000"/><rect x="2" y="9" width="1" height="1" fill="#000"/><rect x="3" y="9" width="1" height="1" fill="#00ffff"/><rect x="4" y="9" width="1" height="1" fill="#000"/><rect x="5" y="9" width="4" height="1" fill="#a0a0a0"/><rect x="9" y="9" width="1" height="1" fill="#000"/><rect x="2" y="10" width="1" height="1" fill="#000"/><rect x="3" y="10" width="1" height="1" fill="#00ffff"/><rect x="4" y="10" width="1" height="1" fill="#000"/><rect x="5" y="10" width="4" height="1" fill="#a0a0a0"/><rect x="9" y="10" width="1" height="1" fill="#000"/><rect x="1" y="11" width="2" height="1" fill="#000"/><rect x="3" y="11" width="1" height="1" fill="#00ffff"/><rect x="4" y="11" width="9" height="1" fill="#000"/><rect x="2" y="12" width="1" height="1" fill="#000"/><rect x="3" y="12" width="2" height="1" fill="#00ffff"/><rect x="5" y="12" width="1" height="1" fill="#000"/><rect x="8" y="12" width="1" height="1" fill="#000"/><rect x="3" y="13" width="1" height="1" fill="#000"/><rect x="4" y="13" width="1" height="1" fill="#00ffff"/><rect x="5" y="13" width="1" height="1" fill="#000"/><rect x="7" y="13" width="2" height="1" fill="#000"/><rect x="4" y="14" width="2" height="1" fill="#000"/></svg>
<svg class="a" style="left:326px;top:8px" width="18" height="18" viewBox="0 0 18 18" shape-rendering="crispEdges"><rect x="6" y="1" width="11" height="1" fill="#000"/><rect x="6" y="2" width="11" height="1" fill="#000"/><rect x="6" y="3" width="3" height="1" fill="#000"/><rect x="9" y="3" width="5" height="1" fill="#fff"/><rect x="14" y="3" width="3" height="1" fill="#000"/><rect x="2" y="4" width="6" height="1" fill="#000"/><rect x="8" y="4" width="1" height="1" fill="#fff"/><rect x="9" y="4" width="5" height="1" fill="#000"/><rect x="14" y="4" width="1" height="1" fill="#fff"/><rect x="15" y="4" width="2" height="1" fill="#000"/><rect x="2" y="5" width="1" height="1" fill="#000"/><rect x="3" y="5" width="3" height="1" fill="#dedd78"/><rect x="6" y="5" width="2" height="1" fill="#000"/><rect x="8" y="5" width="1" height="1" fill="#fff"/><rect x="9" y="5" width="8" height="1" fill="#000"/><rect x="2" y="6" width="1" height="1" fill="#000"/><rect x="3" y="6" width="3" height="1" fill="#dedd78"/><rect x="6" y="6" width="2" height="1" fill="#000"/><rect x="8" y="6" width="1" height="1" fill="#fff"/><rect x="9" y="6" width="8" height="1" fill="#000"/><rect x="2" y="7" width="1" height="1" fill="#000"/><rect x="3" y="7" width="3" height="1" fill="#dedd78"/><rect x="6" y="7" width="2" height="1" fill="#000"/><rect x="8" y="7" width="1" height="1" fill="#fff"/><rect x="9" y="7" width="8" height="1" fill="#000"/><rect x="2" y="8" width="1" height="1" fill="#000"/><rect x="3" y="8" width="3" height="1" fill="#dedd78"/><rect x="6" y="8" width="2" height="1" fill="#000"/><rect x="8" y="8" width="1" height="1" fill="#fff"/><rect x="9" y="8" width="5" height="1" fill="#000"/><rect x="14" y="8" width="1" height="1" fill="#fff"/><rect x="15" y="8" width="2" height="1" fill="#000"/><rect x="2" y="9" width="1" height="1" fill="#000"/><rect x="3" y="9" width="3" height="1" fill="#dedd78"/><rect x="6" y="9" width="3" height="1" fill="#000"/><rect x="9" y="9" width="5" height="1" fill="#fff"/><rect x="14" y="9" width="3" height="1" fill="#000"/><rect x="1" y="10" width="16" height="1" fill="#000"/><rect x="1" y="11" width="14" height="1" fill="#fff"/><rect x="15" y="11" width="2" height="1" fill="#000"/><rect x="1" y="12" width="14" height="1" fill="#dedd78"/><rect x="15" y="12" width="2" height="1" fill="#000"/><rect x="2" y="13" width="14" height="1" fill="#dedd78"/><rect x="16" y="13" width="1" height="1" fill="#000"/><rect x="3" y="14" width="13" height="1" fill="#dedd78"/><rect x="1" y="15" width="1" height="1" fill="#a0a0a0"/><rect x="2" y="15" width="14" height="1" fill="#fff"/><rect x="1" y="16" width="16" height="1" fill="#a0a0a0"/></svg>
<svg class="a" style="left:377px;top:8px" width="18" height="18" viewBox="0 0 18 18" shape-rendering="crispEdges"><rect x="1" y="1" width="3" height="1" fill="#fff"/><rect x="4" y="1" width="4" height="1" fill="#a0a0a0"/><rect x="8" y="1" width="8" height="1" fill="#fff"/><rect x="1" y="2" width="2" height="1" fill="#fff"/><rect x="3" y="2" width="1" height="1" fill="#a0a0a0"/><rect x="4" y="2" width="4" height="1" fill="#fff"/><rect x="8" y="2" width="1" height="1" fill="#a0a0a0"/><rect x="9" y="2" width="7" height="1" fill="#fff"/><rect x="1" y="3" width="1" height="1" fill="#fff"/><rect x="2" y="3" width="1" height="1" fill="#a0a0a0"/><rect x="3" y="3" width="6" height="1" fill="#fff"/><rect x="9" y="3" width="1" height="1" fill="#a0a0a0"/><rect x="10" y="3" width="6" height="1" fill="#fff"/><rect x="1" y="4" width="1" height="1" fill="#fff"/><rect x="2" y="4" width="1" height="1" fill="#a0a0a0"/><rect x="3" y="4" width="1" height="1" fill="#fff"/><rect x="4" y="4" width="4" height="1" fill="#a0a0a0"/><rect x="8" y="4" width="1" height="1" fill="#fff"/><rect x="9" y="4" width="1" height="1" fill="#a0a0a0"/><rect x="10" y="4" width="6" height="1" fill="#fff"/><rect x="1" y="5" width="1" height="1" fill="#fff"/><rect x="2" y="5" width="3" height="1" fill="#a06030"/><rect x="5" y="5" width="3" height="1" fill="#e0a040"/><rect x="8" y="5" width="1" height="1" fill="#a06030"/><rect x="9" y="5" width="1" height="1" fill="#a0a0a0"/><rect x="10" y="5" width="6" height="1" fill="#fff"/><rect x="1" y="6" width="1" height="1" fill="#fff"/><rect x="2" y="6" width="1" height="1" fill="#a06030"/><rect x="3" y="6" width="2" height="1" fill="#e0a040"/><rect x="5" y="6" width="1" height="1" fill="#a8d0f5"/><rect x="6" y="6" width="1" height="1" fill="#e0a040"/><rect x="7" y="6" width="1" height="1" fill="#ffff00"/><rect x="8" y="6" width="1" height="1" fill="#e0a040"/><rect x="9" y="6" width="1" height="1" fill="#a0a0a0"/><rect x="10" y="6" width="6" height="1" fill="#fff"/><rect x="1" y="7" width="1" height="1" fill="#fff"/><rect x="2" y="7" width="1" height="1" fill="#a06030"/><rect x="3" y="7" width="5" height="1" fill="#ffff00"/><rect x="8" y="7" width="1" height="1" fill="#a06030"/><rect x="9" y="7" width="2" height="1" fill="#fff"/><rect x="11" y="7" width="5" height="1" fill="#a0a0a0"/><rect x="16" y="7" width="1" height="1" fill="#fff"/><rect x="1" y="8" width="2" height="1" fill="#fff"/><rect x="3" y="8" width="1" height="1" fill="#a06030"/><rect x="4" y="8" width="3" height="1" fill="#ffff00"/><rect x="7" y="8" width="1" height="1" fill="#a06030"/><rect x="8" y="8" width="4" height="1" fill="#fff"/><rect x="12" y="8" width="1" height="1" fill="#ff0000"/><rect x="13" y="8" width="2" height="1" fill="#fff"/><rect x="15" y="8" width="1" height="1" fill="#a0a0a0"/><rect x="16" y="8" width="1" height="1" fill="#fff"/><rect x="1" y="9" width="1" height="1" fill="#fff"/><rect x="2" y="9" width="1" height="1" fill="#a0a0a0"/><rect x="3" y="9" width="3" height="1" fill="#a8d0f5"/><rect x="6" y="9" width="1" height="1" fill="#ff0000"/><rect x="7" y="9" width="3" height="1" fill="#a8d0f5"/><rect x="10" y="9" width="1" height="1" fill="#a0a0a0"/><rect x="11" y="9" width="1" height="1" fill="#ffff00"/><rect x="12" y="9" width="5" height="1" fill="#fff"/><rect x="1" y="10" width="1" height="1" fill="#fff"/><rect x="2" y="10" width="1" height="1" fill="#a0a0a0"/><rect x="3" y="10" width="3" height="1" fill="#a8d0f5"/><rect x="6" y="10" width="1" height="1" fill="#ff0000"/><rect x="7" y="10" width="4" height="1" fill="#a8d0f5"/><rect x="11" y="10" width="1" height="1" fill="#fff"/><rect x="12" y="10" width="1" height="1" fill="#dedd78"/><rect x="13" y="10" width="4" height="1" fill="#fff"/><rect x="1" y="11" width="1" height="1" fill="#fff"/><rect x="2" y="11" width="1" height="1" fill="#e0a040"/><rect x="3" y="11" width="2" height="1" fill="#a8d0f5"/><rect x="5" y="11" width="2" height="1" fill="#ff0000"/><rect x="7" y="11" width="3" height="1" fill="#a8d0f5"/><rect x="10" y="11" width="1" height="1" fill="#a0a0a0"/><rect x="11" y="11" width="6" height="1" fill="#fff"/><rect x="1" y="12" width="1" height="1" fill="#fff"/><rect x="2" y="12" width="1" height="1" fill="#ff0000"/><rect x="3" y="12" width="2" height="1" fill="#a8d0f5"/><rect x="5" y="12" width="2" height="1" fill="#ff0000"/><rect x="7" y="12" width="2" height="1" fill="#a8d0f5"/><rect x="9" y="12" width="1" height="1" fill="#a0a0a0"/><rect x="10" y="12" width="7" height="1" fill="#fff"/><rect x="1" y="13" width="1" height="1" fill="#fff"/><rect x="2" y="13" width="1" height="1" fill="#ff0000"/><rect x="3" y="13" width="2" height="1" fill="#a8d0f5"/><rect x="5" y="13" width="2" height="1" fill="#ff0000"/><rect x="7" y="13" width="1" height="1" fill="#a8d0f5"/><rect x="8" y="13" width="1" height="1" fill="#a0a0a0"/><rect x="9" y="13" width="8" height="1" fill="#fff"/><rect x="1" y="14" width="1" height="1" fill="#fff"/><rect x="2" y="14" width="1" height="1" fill="#008000"/><rect x="3" y="14" width="1" height="1" fill="#a8d0f5"/><rect x="4" y="14" width="4" height="1" fill="#a0a0a0"/><rect x="8" y="14" width="9" height="1" fill="#fff"/></svg>
<svg class="a" style="left:426px;top:8px" width="18" height="18" viewBox="0 0 18 18" shape-rendering="crispEdges"><rect x="4" y="2" width="3" height="1" fill="#000"/><rect x="10" y="2" width="3" height="1" fill="#000"/><rect x="4" y="3" width="1" height="1" fill="#000"/><rect x="5" y="3" width="1" height="1" fill="#fff"/><rect x="6" y="3" width="1" height="1" fill="#000"/><rect x="10" y="3" width="1" height="1" fill="#000"/><rect x="11" y="3" width="1" height="1" fill="#fff"/><rect x="12" y="3" width="1" height="1" fill="#000"/><rect x="4" y="4" width="3" height="1" fill="#000"/><rect x="10" y="4" width="3" height="1" fill="#000"/><rect x="3" y="5" width="6" height="1" fill="#000"/><rect x="10" y="5" width="5" height="1" fill="#000"/><rect x="3" y="6" width="1" height="1" fill="#000"/><rect x="4" y="6" width="1" height="1" fill="#fff"/><rect x="5" y="6" width="5" height="1" fill="#000"/><rect x="10" y="6" width="1" height="1" fill="#fff"/><rect x="11" y="6" width="4" height="1" fill="#000"/><rect x="2" y="7" width="13" height="1" fill="#000"/><rect x="1" y="8" width="2" height="1" fill="#000"/><rect x="3" y="8" width="1" height="1" fill="#fff"/><rect x="4" y="8" width="3" height="1" fill="#000"/><rect x="7" y="8" width="1" height="1" fill="#fff"/><rect x="8" y="8" width="2" height="1" fill="#000"/><rect x="10" y="8" width="1" height="1" fill="#fff"/><rect x="11" y="8" width="5" height="1" fill="#000"/><rect x="1" y="9" width="2" height="1" fill="#000"/><rect x="3" y="9" width="1" height="1" fill="#fff"/><rect x="4" y="9" width="3" height="1" fill="#000"/><rect x="7" y="9" width="1" height="1" fill="#fff"/><rect x="8" y="9" width="2" height="1" fill="#000"/><rect x="10" y="9" width="1" height="1" fill="#fff"/><rect x="11" y="9" width="5" height="1" fill="#000"/><rect x="1" y="10" width="2" height="1" fill="#000"/><rect x="3" y="10" width="1" height="1" fill="#fff"/><rect x="4" y="10" width="6" height="1" fill="#000"/><rect x="10" y="10" width="1" height="1" fill="#fff"/><rect x="11" y="10" width="5" height="1" fill="#000"/><rect x="1" y="11" width="7" height="1" fill="#000"/><rect x="9" y="11" width="7" height="1" fill="#000"/><rect x="1" y="12" width="1" height="1" fill="#000"/><rect x="2" y="12" width="1" height="1" fill="#fff"/><rect x="3" y="12" width="3" height="1" fill="#000"/><rect x="11" y="12" width="1" height="1" fill="#000"/><rect x="12" y="12" width="1" height="1" fill="#fff"/><rect x="13" y="12" width="3" height="1" fill="#000"/><rect x="1" y="13" width="1" height="1" fill="#000"/><rect x="2" y="13" width="1" height="1" fill="#fff"/><rect x="3" y="13" width="3" height="1" fill="#000"/><rect x="11" y="13" width="1" height="1" fill="#000"/><rect x="12" y="13" width="1" height="1" fill="#fff"/><rect x="13" y="13" width="3" height="1" fill="#000"/><rect x="1" y="14" width="5" height="1" fill="#000"/><rect x="11" y="14" width="5" height="1" fill="#000"/></svg>
<svg class="a" style="left:476px;top:8px" width="18" height="18" viewBox="0 0 18 18" shape-rendering="crispEdges"><rect x="3" y="3" width="5" height="1" fill="#000"/><rect x="2" y="4" width="1" height="1" fill="#000"/><rect x="3" y="4" width="5" height="1" fill="#fff"/><rect x="8" y="4" width="1" height="1" fill="#000"/><rect x="2" y="5" width="12" height="1" fill="#000"/><rect x="2" y="6" width="1" height="1" fill="#000"/><rect x="3" y="6" width="1" height="1" fill="#ffff00"/><rect x="4" y="6" width="1" height="1" fill="#fff"/><rect x="5" y="6" width="1" height="1" fill="#ffff00"/><rect x="6" y="6" width="1" height="1" fill="#fff"/><rect x="7" y="6" width="1" height="1" fill="#ffff00"/><rect x="8" y="6" width="1" height="1" fill="#fff"/><rect x="9" y="6" width="1" height="1" fill="#ffff00"/><rect x="10" y="6" width="1" height="1" fill="#fff"/><rect x="11" y="6" width="1" height="1" fill="#ffff00"/><rect x="12" y="6" width="1" height="1" fill="#fff"/><rect x="13" y="6" width="1" height="1" fill="#000"/><rect x="2" y="7" width="1" height="1" fill="#000"/><rect x="3" y="7" width="1" height="1" fill="#fff"/><rect x="4" y="7" width="1" height="1" fill="#ffff00"/><rect x="5" y="7" width="1" height="1" fill="#fff"/><rect x="6" y="7" width="1" height="1" fill="#ffff00"/><rect x="7" y="7" width="1" height="1" fill="#fff"/><rect x="8" y="7" width="1" height="1" fill="#ffff00"/><rect x="9" y="7" width="1" height="1" fill="#fff"/><rect x="10" y="7" width="1" height="1" fill="#ffff00"/><rect x="11" y="7" width="1" height="1" fill="#fff"/><rect x="12" y="7" width="1" height="1" fill="#ffff00"/><rect x="13" y="7" width="1" height="1" fill="#000"/><rect x="2" y="8" width="1" height="1" fill="#000"/><rect x="3" y="8" width="1" height="1" fill="#ffff00"/><rect x="4" y="8" width="1" height="1" fill="#fff"/><rect x="5" y="8" width="1" height="1" fill="#ffff00"/><rect x="6" y="8" width="1" height="1" fill="#fff"/><rect x="7" y="8" width="1" height="1" fill="#ffff00"/><rect x="8" y="8" width="1" height="1" fill="#fff"/><rect x="9" y="8" width="1" height="1" fill="#ffff00"/><rect x="10" y="8" width="1" height="1" fill="#fff"/><rect x="11" y="8" width="1" height="1" fill="#ffff00"/><rect x="12" y="8" width="1" height="1" fill="#fff"/><rect x="13" y="8" width="1" height="1" fill="#000"/><rect x="2" y="9" width="1" height="1" fill="#000"/><rect x="3" y="9" width="1" height="1" fill="#fff"/><rect x="4" y="9" width="1" height="1" fill="#ffff00"/><rect x="5" y="9" width="1" height="1" fill="#fff"/><rect x="6" y="9" width="1" height="1" fill="#ffff00"/><rect x="7" y="9" width="1" height="1" fill="#fff"/><rect x="8" y="9" width="1" height="1" fill="#ffff00"/><rect x="9" y="9" width="1" height="1" fill="#fff"/><rect x="10" y="9" width="1" height="1" fill="#ffff00"/><rect x="11" y="9" width="1" height="1" fill="#fff"/><rect x="12" y="9" width="1" height="1" fill="#ffff00"/><rect x="13" y="9" width="1" height="1" fill="#000"/><rect x="2" y="10" width="1" height="1" fill="#000"/><rect x="3" y="10" width="1" height="1" fill="#ffff00"/><rect x="4" y="10" width="1" height="1" fill="#fff"/><rect x="5" y="10" width="1" height="1" fill="#ffff00"/><rect x="6" y="10" width="1" height="1" fill="#fff"/><rect x="7" y="10" width="1" height="1" fill="#ffff00"/><rect x="8" y="10" width="1" height="1" fill="#fff"/><rect x="9" y="10" width="1" height="1" fill="#ffff00"/><rect x="10" y="10" width="1" height="1" fill="#fff"/><rect x="11" y="10" width="1" height="1" fill="#ffff00"/><rect x="12" y="10" width="1" height="1" fill="#fff"/><rect x="13" y="10" width="1" height="1" fill="#000"/><rect x="2" y="11" width="1" height="1" fill="#000"/><rect x="3" y="11" width="1" height="1" fill="#fff"/><rect x="4" y="11" width="1" height="1" fill="#ffff00"/><rect x="5" y="11" width="1" height="1" fill="#fff"/><rect x="6" y="11" width="1" height="1" fill="#ffff00"/><rect x="7" y="11" width="1" height="1" fill="#fff"/><rect x="8" y="11" width="1" height="1" fill="#ffff00"/><rect x="9" y="11" width="1" height="1" fill="#fff"/><rect x="10" y="11" width="1" height="1" fill="#ffff00"/><rect x="11" y="11" width="1" height="1" fill="#fff"/><rect x="12" y="11" width="1" height="1" fill="#ffff00"/><rect x="13" y="11" width="1" height="1" fill="#000"/><rect x="2" y="12" width="1" height="1" fill="#000"/><rect x="3" y="12" width="1" height="1" fill="#ffff00"/><rect x="4" y="12" width="1" height="1" fill="#fff"/><rect x="5" y="12" width="1" height="1" fill="#ffff00"/><rect x="6" y="12" width="1" height="1" fill="#fff"/><rect x="7" y="12" width="1" height="1" fill="#ffff00"/><rect x="8" y="12" width="1" height="1" fill="#fff"/><rect x="9" y="12" width="1" height="1" fill="#ffff00"/><rect x="10" y="12" width="1" height="1" fill="#fff"/><rect x="11" y="12" width="1" height="1" fill="#ffff00"/><rect x="12" y="12" width="1" height="1" fill="#fff"/><rect x="13" y="12" width="1" height="1" fill="#000"/><rect x="2" y="13" width="1" height="1" fill="#000"/><rect x="3" y="13" width="1" height="1" fill="#fff"/><rect x="4" y="13" width="1" height="1" fill="#ffff00"/><rect x="5" y="13" width="1" height="1" fill="#fff"/><rect x="6" y="13" width="1" height="1" fill="#ffff00"/><rect x="7" y="13" width="1" height="1" fill="#fff"/><rect x="8" y="13" width="1" height="1" fill="#ffff00"/><rect x="9" y="13" width="1" height="1" fill="#fff"/><rect x="10" y="13" width="1" height="1" fill="#ffff00"/><rect x="11" y="13" width="1" height="1" fill="#fff"/><rect x="12" y="13" width="1" height="1" fill="#ffff00"/><rect x="13" y="13" width="1" height="1" fill="#000"/><rect x="2" y="14" width="12" height="1" fill="#000"/></svg>
<svg class="a" style="left:526px;top:8px" width="18" height="18" viewBox="0 0 18 18" shape-rendering="crispEdges"><rect x="2" y="1" width="14" height="1" fill="#000"/><rect x="2" y="2" width="1" height="1" fill="#000"/><rect x="3" y="2" width="1" height="1" fill="#808000"/><rect x="4" y="2" width="1" height="1" fill="#000"/><rect x="5" y="2" width="8" height="1" fill="#fff"/><rect x="13" y="2" width="1" height="1" fill="#000"/><rect x="14" y="2" width="1" height="1" fill="#fff"/><rect x="15" y="2" width="1" height="1" fill="#000"/><rect x="2" y="3" width="1" height="1" fill="#000"/><rect x="3" y="3" width="1" height="1" fill="#808000"/><rect x="4" y="3" width="1" height="1" fill="#000"/><rect x="5" y="3" width="1" height="1" fill="#fff"/><rect x="6" y="3" width="6" height="1" fill="#f0f0f0"/><rect x="12" y="3" width="1" height="1" fill="#fff"/><rect x="13" y="3" width="3" height="1" fill="#000"/><rect x="2" y="4" width="1" height="1" fill="#000"/><rect x="3" y="4" width="1" height="1" fill="#808000"/><rect x="4" y="4" width="1" height="1" fill="#000"/><rect x="5" y="4" width="1" height="1" fill="#fff"/><rect x="6" y="4" width="6" height="1" fill="#f0f0f0"/><rect x="12" y="4" width="1" height="1" fill="#fff"/><rect x="13" y="4" width="1" height="1" fill="#000"/><rect x="14" y="4" width="1" height="1" fill="#808000"/><rect x="15" y="4" width="1" height="1" fill="#000"/><rect x="2" y="5" width="1" height="1" fill="#000"/><rect x="3" y="5" width="1" height="1" fill="#808000"/><rect x="4" y="5" width="1" height="1" fill="#000"/><rect x="5" y="5" width="1" height="1" fill="#fff"/><rect x="6" y="5" width="6" height="1" fill="#f0f0f0"/><rect x="12" y="5" width="1" height="1" fill="#fff"/><rect x="13" y="5" width="1" height="1" fill="#000"/><rect x="14" y="5" width="1" height="1" fill="#808000"/><rect x="15" y="5" width="1" height="1" fill="#000"/><rect x="2" y="6" width="1" height="1" fill="#000"/><rect x="3" y="6" width="1" height="1" fill="#808000"/><rect x="4" y="6" width="1" height="1" fill="#000"/><rect x="5" y="6" width="1" height="1" fill="#fff"/><rect x="6" y="6" width="6" height="1" fill="#f0f0f0"/><rect x="12" y="6" width="1" height="1" fill="#fff"/><rect x="13" y="6" width="1" height="1" fill="#000"/><rect x="14" y="6" width="1" height="1" fill="#808000"/><rect x="15" y="6" width="1" height="1" fill="#000"/><rect x="2" y="7" width="1" height="1" fill="#000"/><rect x="3" y="7" width="1" height="1" fill="#808000"/><rect x="4" y="7" width="1" height="1" fill="#000"/><rect x="5" y="7" width="8" height="1" fill="#fff"/><rect x="13" y="7" width="1" height="1" fill="#000"/><rect x="14" y="7" width="1" height="1" fill="#808000"/><rect x="15" y="7" width="1" height="1" fill="#000"/><rect x="2" y="8" width="1" height="1" fill="#000"/><rect x="3" y="8" width="2" height="1" fill="#808000"/><rect x="5" y="8" width="8" height="1" fill="#000"/><rect x="13" y="8" width="2" height="1" fill="#808000"/><rect x="15" y="8" width="1" height="1" fill="#000"/><rect x="2" y="9" width="1" height="1" fill="#000"/><rect x="3" y="9" width="12" height="1" fill="#808000"/><rect x="15" y="9" width="1" height="1" fill="#000"/><rect x="2" y="10" width="1" height="1" fill="#000"/><rect x="3" y="10" width="2" height="1" fill="#808000"/><rect x="5" y="10" width="9" height="1" fill="#000"/><rect x="14" y="10" width="1" height="1" fill="#808000"/><rect x="15" y="10" width="1" height="1" fill="#000"/><rect x="2" y="11" width="1" height="1" fill="#000"/><rect x="3" y="11" width="2" height="1" fill="#808000"/><rect x="5" y="11" width="5" height="1" fill="#000"/><rect x="10" y="11" width="2" height="1" fill="#fff"/><rect x="12" y="11" width="2" height="1" fill="#000"/><rect x="14" y="11" width="1" height="1" fill="#808000"/><rect x="15" y="11" width="1" height="1" fill="#000"/><rect x="2" y="12" width="1" height="1" fill="#000"/><rect x="3" y="12" width="2" height="1" fill="#808000"/><rect x="5" y="12" width="5" height="1" fill="#000"/><rect x="10" y="12" width="2" height="1" fill="#fff"/><rect x="12" y="12" width="2" height="1" fill="#000"/><rect x="14" y="12" width="1" height="1" fill="#808000"/><rect x="15" y="12" width="1" height="1" fill="#000"/><rect x="2" y="13" width="1" height="1" fill="#000"/><rect x="3" y="13" width="2" height="1" fill="#808000"/><rect x="5" y="13" width="5" height="1" fill="#000"/><rect x="10" y="13" width="2" height="1" fill="#fff"/><rect x="12" y="13" width="2" height="1" fill="#000"/><rect x="14" y="13" width="1" height="1" fill="#808000"/><rect x="15" y="13" width="1" height="1" fill="#000"/><rect x="2" y="14" width="14" height="1" fill="#000"/></svg>
<svg class="a" style="left:576px;top:8px" width="18" height="18" viewBox="0 0 18 18" shape-rendering="crispEdges"><rect x="2" y="2" width="6" height="1" fill="#000"/><rect x="10" y="2" width="6" height="1" fill="#000"/><rect x="2" y="3" width="1" height="1" fill="#000"/><rect x="3" y="3" width="12" height="1" fill="#00ffff"/><rect x="15" y="3" width="1" height="1" fill="#000"/><rect x="2" y="4" width="1" height="1" fill="#000"/><rect x="3" y="4" width="12" height="1" fill="#00ffff"/><rect x="15" y="4" width="1" height="1" fill="#000"/><rect x="2" y="5" width="1" height="1" fill="#000"/><rect x="3" y="5" width="12" height="1" fill="#00ffff"/><rect x="15" y="5" width="1" height="1" fill="#000"/><rect x="2" y="6" width="1" height="1" fill="#000"/><rect x="3" y="6" width="12" height="1" fill="#00ffff"/><rect x="15" y="6" width="1" height="1" fill="#000"/><rect x="3" y="7" width="12" height="1" fill="#00ffff"/><rect x="3" y="8" width="12" height="1" fill="#00ffff"/><rect x="3" y="9" width="12" height="1" fill="#00ffff"/><rect x="2" y="10" width="1" height="1" fill="#000"/><rect x="3" y="10" width="12" height="1" fill="#00ffff"/><rect x="15" y="10" width="1" height="1" fill="#000"/><rect x="2" y="11" width="1" height="1" fill="#000"/><rect x="3" y="11" width="12" height="1" fill="#00ffff"/><rect x="15" y="11" width="1" height="1" fill="#000"/><rect x="2" y="12" width="1" height="1" fill="#000"/><rect x="3" y="12" width="12" height="1" fill="#00ffff"/><rect x="15" y="12" width="1" height="1" fill="#000"/><rect x="2" y="13" width="1" height="1" fill="#000"/><rect x="3" y="13" width="12" height="1" fill="#00ffff"/><rect x="15" y="13" width="1" height="1" fill="#000"/><rect x="2" y="14" width="6" height="1" fill="#000"/><rect x="10" y="14" width="6" height="1" fill="#000"/></svg>
<svg class="a" style="left:626px;top:8px" width="18" height="18" viewBox="0 0 18 18" shape-rendering="crispEdges"><rect x="5" y="1" width="8" height="1" fill="#000"/><rect x="3" y="2" width="12" height="1" fill="#000"/><rect x="1" y="3" width="2" height="1" fill="#000"/><rect x="8" y="3" width="1" height="1" fill="#9acd32"/><rect x="9" y="3" width="1" height="1" fill="#800000"/><rect x="15" y="3" width="2" height="1" fill="#000"/><rect x="8" y="4" width="1" height="1" fill="#800000"/><rect x="9" y="4" width="1" height="1" fill="#9acd32"/><rect x="8" y="5" width="1" height="1" fill="#9acd32"/><rect x="9" y="5" width="1" height="1" fill="#800000"/><rect x="8" y="6" width="1" height="1" fill="#800000"/><rect x="9" y="6" width="1" height="1" fill="#9acd32"/><rect x="8" y="7" width="1" height="1" fill="#9acd32"/><rect x="9" y="7" width="1" height="1" fill="#800000"/><rect x="8" y="8" width="1" height="1" fill="#800000"/><rect x="9" y="8" width="1" height="1" fill="#9acd32"/><rect x="8" y="9" width="1" height="1" fill="#9acd32"/><rect x="9" y="9" width="1" height="1" fill="#800000"/><rect x="8" y="10" width="1" height="1" fill="#800000"/><rect x="9" y="10" width="1" height="1" fill="#9acd32"/><rect x="8" y="11" width="1" height="1" fill="#9acd32"/><rect x="9" y="11" width="1" height="1" fill="#800000"/><rect x="8" y="12" width="1" height="1" fill="#800000"/><rect x="9" y="12" width="1" height="1" fill="#9acd32"/><rect x="8" y="13" width="1" height="1" fill="#9acd32"/><rect x="9" y="13" width="1" height="1" fill="#800000"/><rect x="8" y="14" width="1" height="1" fill="#800000"/><rect x="9" y="14" width="1" height="1" fill="#9acd32"/><rect x="8" y="15" width="1" height="1" fill="#9acd32"/><rect x="9" y="15" width="1" height="1" fill="#800000"/></svg>
<svg class="a" style="left:677px;top:8px" width="18" height="18" viewBox="0 0 18 18" shape-rendering="crispEdges"><rect x="8" y="2" width="7" height="1" fill="#000"/><rect x="15" y="2" width="1" height="1" fill="#0000ff"/><rect x="7" y="3" width="1" height="1" fill="#000"/><rect x="8" y="3" width="1" height="1" fill="#ffff00"/><rect x="9" y="3" width="1" height="1" fill="#000"/><rect x="10" y="3" width="1" height="1" fill="#ffff00"/><rect x="11" y="3" width="1" height="1" fill="#000"/><rect x="12" y="3" width="1" height="1" fill="#ffff00"/><rect x="13" y="3" width="1" height="1" fill="#000"/><rect x="14" y="3" width="1" height="1" fill="#ffff00"/><rect x="15" y="3" width="1" height="1" fill="#0000ff"/><rect x="6" y="4" width="1" height="1" fill="#000"/><rect x="7" y="4" width="1" height="1" fill="#ffff00"/><rect x="8" y="4" width="1" height="1" fill="#000"/><rect x="9" y="4" width="1" height="1" fill="#ffff00"/><rect x="10" y="4" width="1" height="1" fill="#000"/><rect x="11" y="4" width="1" height="1" fill="#ffff00"/><rect x="12" y="4" width="1" height="1" fill="#000"/><rect x="13" y="4" width="1" height="1" fill="#ffff00"/><rect x="14" y="4" width="1" height="1" fill="#000"/><rect x="15" y="4" width="1" height="1" fill="#0000ff"/><rect x="5" y="5" width="1" height="1" fill="#000"/><rect x="6" y="5" width="1" height="1" fill="#ffff00"/><rect x="7" y="5" width="1" height="1" fill="#000"/><rect x="8" y="5" width="1" height="1" fill="#ffff00"/><rect x="9" y="5" width="1" height="1" fill="#000"/><rect x="10" y="5" width="1" height="1" fill="#ffff00"/><rect x="11" y="5" width="1" height="1" fill="#000"/><rect x="12" y="5" width="1" height="1" fill="#ffff00"/><rect x="13" y="5" width="1" height="1" fill="#000"/><rect x="14" y="5" width="1" height="1" fill="#ffff00"/><rect x="15" y="5" width="1" height="1" fill="#0000ff"/><rect x="4" y="6" width="1" height="1" fill="#000"/><rect x="5" y="6" width="1" height="1" fill="#ffff00"/><rect x="6" y="6" width="1" height="1" fill="#000"/><rect x="7" y="6" width="1" height="1" fill="#ffff00"/><rect x="8" y="6" width="1" height="1" fill="#000"/><rect x="9" y="6" width="1" height="1" fill="#ffff00"/><rect x="10" y="6" width="1" height="1" fill="#000"/><rect x="11" y="6" width="1" height="1" fill="#ffff00"/><rect x="12" y="6" width="1" height="1" fill="#000"/><rect x="13" y="6" width="1" height="1" fill="#ffff00"/><rect x="14" y="6" width="1" height="1" fill="#000"/><rect x="15" y="6" width="1" height="1" fill="#0000ff"/><rect x="3" y="7" width="1" height="1" fill="#000"/><rect x="4" y="7" width="1" height="1" fill="#ffff00"/><rect x="5" y="7" width="1" height="1" fill="#000"/><rect x="6" y="7" width="1" height="1" fill="#ffff00"/><rect x="7" y="7" width="1" height="1" fill="#000"/><rect x="8" y="7" width="1" height="1" fill="#ffff00"/><rect x="9" y="7" width="1" height="1" fill="#000"/><rect x="10" y="7" width="1" height="1" fill="#ffff00"/><rect x="11" y="7" width="4" height="1" fill="#000"/><rect x="15" y="7" width="1" height="1" fill="#0000ff"/><rect x="2" y="8" width="1" height="1" fill="#000"/><rect x="3" y="8" width="1" height="1" fill="#ffff00"/><rect x="4" y="8" width="1" height="1" fill="#000"/><rect x="6" y="8" width="1" height="1" fill="#000"/><rect x="7" y="8" width="1" height="1" fill="#ffff00"/><rect x="8" y="8" width="1" height="1" fill="#000"/><rect x="9" y="8" width="1" height="1" fill="#ffff00"/><rect x="10" y="8" width="1" height="1" fill="#000"/><rect x="2" y="9" width="2" height="1" fill="#000"/><rect x="7" y="9" width="1" height="1" fill="#000"/><rect x="8" y="9" width="1" height="1" fill="#ffff00"/><rect x="9" y="9" width="1" height="1" fill="#000"/><rect x="8" y="10" width="1" height="1" fill="#000"/><rect x="1" y="11" width="14" height="1" fill="#000"/><rect x="1" y="12" width="1" height="1" fill="#000"/><rect x="2" y="12" width="12" height="1" fill="#fff"/><rect x="14" y="12" width="1" height="1" fill="#000"/><rect x="15" y="12" width="1" height="1" fill="#a0a0a0"/><rect x="1" y="13" width="1" height="1" fill="#000"/><rect x="2" y="13" width="12" height="1" fill="#fff"/><rect x="14" y="13" width="1" height="1" fill="#000"/><rect x="15" y="13" width="1" height="1" fill="#a0a0a0"/><rect x="1" y="14" width="14" height="1" fill="#000"/><rect x="15" y="14" width="1" height="1" fill="#a0a0a0"/><rect x="2" y="15" width="14" height="1" fill="#a0a0a0"/></svg>
<svg class="a" style="left:727px;top:8px" width="18" height="18" viewBox="0 0 18 18" shape-rendering="crispEdges"><rect x="10" y="3" width="4" height="1" fill="#000"/><rect x="4" y="4" width="1" height="1" fill="#000"/><rect x="9" y="4" width="1" height="1" fill="#000"/><rect x="10" y="4" width="4" height="1" fill="#008080"/><rect x="14" y="4" width="1" height="1" fill="#000"/><rect x="3" y="5" width="1" height="1" fill="#000"/><rect x="4" y="5" width="1" height="1" fill="#ffff00"/><rect x="5" y="5" width="1" height="1" fill="#000"/><rect x="9" y="5" width="1" height="1" fill="#000"/><rect x="10" y="5" width="4" height="1" fill="#008080"/><rect x="14" y="5" width="1" height="1" fill="#000"/><rect x="2" y="6" width="1" height="1" fill="#000"/><rect x="3" y="6" width="2" height="1" fill="#ffff00"/><rect x="5" y="6" width="9" height="1" fill="#000"/><rect x="14" y="6" width="1" height="1" fill="#008080"/><rect x="15" y="6" width="1" height="1" fill="#000"/><rect x="1" y="7" width="1" height="1" fill="#000"/><rect x="2" y="7" width="6" height="1" fill="#ffff00"/><rect x="8" y="7" width="1" height="1" fill="#000"/><rect x="9" y="7" width="5" height="1" fill="#008080"/><rect x="14" y="7" width="1" height="1" fill="#c8c8e0"/><rect x="15" y="7" width="1" height="1" fill="#000"/><rect x="0" y="8" width="1" height="1" fill="#000"/><rect x="1" y="8" width="7" height="1" fill="#ffff00"/><rect x="8" y="8" width="1" height="1" fill="#000"/><rect x="9" y="8" width="5" height="1" fill="#008080"/><rect x="14" y="8" width="1" height="1" fill="#c8c8e0"/><rect x="15" y="8" width="1" height="1" fill="#000"/><rect x="1" y="9" width="1" height="1" fill="#000"/><rect x="2" y="9" width="6" height="1" fill="#ffff00"/><rect x="8" y="9" width="1" height="1" fill="#000"/><rect x="9" y="9" width="5" height="1" fill="#008080"/><rect x="14" y="9" width="1" height="1" fill="#c8c8e0"/><rect x="15" y="9" width="1" height="1" fill="#000"/><rect x="2" y="10" width="1" height="1" fill="#000"/><rect x="3" y="10" width="2" height="1" fill="#ffff00"/><rect x="5" y="10" width="4" height="1" fill="#000"/><rect x="9" y="10" width="5" height="1" fill="#008080"/><rect x="14" y="10" width="1" height="1" fill="#c8c8e0"/><rect x="15" y="10" width="1" height="1" fill="#000"/><rect x="3" y="11" width="1" height="1" fill="#000"/><rect x="4" y="11" width="1" height="1" fill="#ffff00"/><rect x="5" y="11" width="1" height="1" fill="#000"/><rect x="9" y="11" width="1" height="1" fill="#000"/><rect x="10" y="11" width="4" height="1" fill="#008080"/><rect x="14" y="11" width="1" height="1" fill="#c8c8e0"/><rect x="15" y="11" width="1" height="1" fill="#000"/><rect x="4" y="12" width="1" height="1" fill="#000"/><rect x="9" y="12" width="1" height="1" fill="#000"/><rect x="10" y="12" width="4" height="1" fill="#008080"/><rect x="14" y="12" width="1" height="1" fill="#000"/><rect x="9" y="13" width="6" height="1" fill="#000"/></svg>
<svg class="a" style="left:777px;top:8px" width="18" height="18" viewBox="0 0 18 18" shape-rendering="crispEdges"><rect x="2" y="2" width="4" height="1" fill="#000"/><rect x="1" y="3" width="1" height="1" fill="#000"/><rect x="2" y="3" width="4" height="1" fill="#fff"/><rect x="6" y="3" width="3" height="1" fill="#000"/><rect x="9" y="3" width="3" height="1" fill="#ff0000"/><rect x="1" y="4" width="1" height="1" fill="#000"/><rect x="2" y="4" width="6" height="1" fill="#fff"/><rect x="8" y="4" width="1" height="1" fill="#000"/><rect x="9" y="4" width="3" height="1" fill="#ff0000"/><rect x="1" y="5" width="1" height="1" fill="#000"/><rect x="2" y="5" width="1" height="1" fill="#ffff00"/><rect x="3" y="5" width="1" height="1" fill="#fff"/><rect x="4" y="5" width="1" height="1" fill="#ffff00"/><rect x="5" y="5" width="1" height="1" fill="#fff"/><rect x="6" y="5" width="1" height="1" fill="#ffff00"/><rect x="7" y="5" width="1" height="1" fill="#fff"/><rect x="8" y="5" width="1" height="1" fill="#000"/><rect x="10" y="5" width="2" height="1" fill="#ff0000"/><rect x="1" y="6" width="1" height="1" fill="#000"/><rect x="2" y="6" width="1" height="1" fill="#fff"/><rect x="3" y="6" width="1" height="1" fill="#ffff00"/><rect x="4" y="6" width="1" height="1" fill="#fff"/><rect x="5" y="6" width="1" height="1" fill="#ffff00"/><rect x="6" y="6" width="1" height="1" fill="#fff"/><rect x="7" y="6" width="1" height="1" fill="#ffff00"/><rect x="8" y="6" width="1" height="1" fill="#000"/><rect x="10" y="6" width="5" height="1" fill="#ff0000"/><rect x="1" y="7" width="8" height="1" fill="#000"/><rect x="11" y="7" width="3" height="1" fill="#ff0000"/><rect x="3" y="8" width="1" height="1" fill="#ff0000"/><rect x="12" y="8" width="1" height="1" fill="#ff0000"/><rect x="2" y="9" width="3" height="1" fill="#ff0000"/><rect x="8" y="9" width="4" height="1" fill="#000"/><rect x="1" y="10" width="5" height="1" fill="#ff0000"/><rect x="7" y="10" width="1" height="1" fill="#000"/><rect x="8" y="10" width="4" height="1" fill="#fff"/><rect x="12" y="10" width="3" height="1" fill="#000"/><rect x="3" y="11" width="2" height="1" fill="#ff0000"/><rect x="7" y="11" width="1" height="1" fill="#000"/><rect x="8" y="11" width="6" height="1" fill="#fff"/><rect x="14" y="11" width="1" height="1" fill="#000"/><rect x="3" y="12" width="4" height="1" fill="#ff0000"/><rect x="7" y="12" width="1" height="1" fill="#000"/><rect x="8" y="12" width="1" height="1" fill="#ffff00"/><rect x="9" y="12" width="1" height="1" fill="#fff"/><rect x="10" y="12" width="1" height="1" fill="#ffff00"/><rect x="11" y="12" width="1" height="1" fill="#fff"/><rect x="12" y="12" width="1" height="1" fill="#ffff00"/><rect x="13" y="12" width="1" height="1" fill="#fff"/><rect x="14" y="12" width="1" height="1" fill="#000"/><rect x="3" y="13" width="4" height="1" fill="#ff0000"/><rect x="7" y="13" width="1" height="1" fill="#000"/><rect x="8" y="13" width="1" height="1" fill="#fff"/><rect x="9" y="13" width="1" height="1" fill="#ffff00"/><rect x="10" y="13" width="1" height="1" fill="#fff"/><rect x="11" y="13" width="1" height="1" fill="#ffff00"/><rect x="12" y="13" width="1" height="1" fill="#fff"/><rect x="13" y="13" width="1" height="1" fill="#ffff00"/><rect x="14" y="13" width="1" height="1" fill="#000"/><rect x="7" y="14" width="8" height="1" fill="#000"/></svg>
<svg class="a" style="left:826px;top:8px" width="18" height="18" viewBox="0 0 18 18" shape-rendering="crispEdges"><rect x="2" y="2" width="10" height="1" fill="#000"/><rect x="2" y="3" width="1" height="1" fill="#000"/><rect x="3" y="3" width="8" height="1" fill="#fff"/><rect x="11" y="3" width="1" height="1" fill="#000"/><rect x="2" y="4" width="1" height="1" fill="#000"/><rect x="3" y="4" width="1" height="1" fill="#fff"/><rect x="4" y="4" width="6" height="1" fill="#0000ff"/><rect x="10" y="4" width="1" height="1" fill="#fff"/><rect x="11" y="4" width="1" height="1" fill="#000"/><rect x="2" y="5" width="1" height="1" fill="#000"/><rect x="3" y="5" width="4" height="1" fill="#fff"/><rect x="7" y="5" width="9" height="1" fill="#000"/><rect x="2" y="6" width="1" height="1" fill="#000"/><rect x="3" y="6" width="1" height="1" fill="#fff"/><rect x="4" y="6" width="3" height="1" fill="#0000ff"/><rect x="7" y="6" width="1" height="1" fill="#000"/><rect x="8" y="6" width="7" height="1" fill="#ffff00"/><rect x="15" y="6" width="1" height="1" fill="#000"/><rect x="2" y="7" width="1" height="1" fill="#000"/><rect x="3" y="7" width="4" height="1" fill="#fff"/><rect x="7" y="7" width="1" height="1" fill="#000"/><rect x="8" y="7" width="2" height="1" fill="#ffff00"/><rect x="10" y="7" width="3" height="1" fill="#ff0000"/><rect x="13" y="7" width="2" height="1" fill="#ffff00"/><rect x="15" y="7" width="1" height="1" fill="#000"/><rect x="2" y="8" width="1" height="1" fill="#000"/><rect x="3" y="8" width="1" height="1" fill="#fff"/><rect x="4" y="8" width="3" height="1" fill="#0000ff"/><rect x="7" y="8" width="1" height="1" fill="#000"/><rect x="8" y="8" width="1" height="1" fill="#ffff00"/><rect x="9" y="8" width="1" height="1" fill="#ff0000"/><rect x="10" y="8" width="3" height="1" fill="#ffff00"/><rect x="13" y="8" width="1" height="1" fill="#ff0000"/><rect x="14" y="8" width="1" height="1" fill="#ffff00"/><rect x="15" y="8" width="1" height="1" fill="#000"/><rect x="2" y="9" width="1" height="1" fill="#000"/><rect x="3" y="9" width="4" height="1" fill="#fff"/><rect x="7" y="9" width="1" height="1" fill="#000"/><rect x="8" y="9" width="4" height="1" fill="#ffff00"/><rect x="12" y="9" width="1" height="1" fill="#ff0000"/><rect x="13" y="9" width="2" height="1" fill="#ffff00"/><rect x="15" y="9" width="1" height="1" fill="#000"/><rect x="2" y="10" width="1" height="1" fill="#000"/><rect x="3" y="10" width="1" height="1" fill="#fff"/><rect x="4" y="10" width="3" height="1" fill="#0000ff"/><rect x="7" y="10" width="1" height="1" fill="#000"/><rect x="8" y="10" width="3" height="1" fill="#ffff00"/><rect x="11" y="10" width="1" height="1" fill="#ff0000"/><rect x="12" y="10" width="3" height="1" fill="#ffff00"/><rect x="15" y="10" width="1" height="1" fill="#000"/><rect x="2" y="11" width="1" height="1" fill="#000"/><rect x="3" y="11" width="4" height="1" fill="#fff"/><rect x="7" y="11" width="1" height="1" fill="#000"/><rect x="8" y="11" width="7" height="1" fill="#ffff00"/><rect x="15" y="11" width="1" height="1" fill="#000"/><rect x="2" y="12" width="6" height="1" fill="#000"/><rect x="8" y="12" width="3" height="1" fill="#ffff00"/><rect x="11" y="12" width="1" height="1" fill="#ff0000"/><rect x="12" y="12" width="3" height="1" fill="#ffff00"/><rect x="15" y="12" width="1" height="1" fill="#000"/><rect x="7" y="13" width="1" height="1" fill="#000"/><rect x="8" y="13" width="7" height="1" fill="#ffff00"/><rect x="15" y="13" width="1" height="1" fill="#000"/><rect x="7" y="14" width="9" height="1" fill="#000"/></svg>
<div class="a" style="left:0px;top:43px;width:2px;height:783px;background:#a0a0a0;"></div>
<div class="a" style="left:2px;top:43px;width:1px;height:783px;background:#696969;"></div>
<div class="a win" style="left:2px;top:43px;width:1028px;height:663px;"></div>
<div class="a" style="left:10px;top:73px;width:1014px;height:627px;background:#f0f0f0;"></div>
<svg class="a" style="left:12px;top:53px" width="16" height="16" viewBox="0 0 16 16" shape-rendering="crispEdges"><rect x="0" y="0" width="16" height="16" fill="#fff"/><rect x="0" y="2" width="14" height="12" fill="#808000"/><rect x="1" y="0" width="5" height="2" fill="#000"/><rect x="6" y="1" width="1" height="1" fill="#000"/><rect x="14" y="2" width="1" height="13" fill="#000"/><rect x="2" y="14" width="13" height="1" fill="#000"/></svg>
<div class="a tbtn" style="left:925px;top:53px;"></div>
<div class="a tbtn" style="left:958px;top:53px;"></div>
<div class="a tbtn" style="left:991px;top:53px;"></div>
<svg class="a" style="left:925px;top:53px" width="99" height="17" viewBox="0 0 99 17"><rect x="10.5" y="8.5" width="10" height="4" rx="1.6" fill="#ececec" stroke="#363636" stroke-width="1"/><rect x="43.5" y="4.5" width="10" height="8" rx="1.2" fill="#ececec" stroke="#363636" stroke-width="1.15"/><rect x="46.5" y="7.5" width="4" height="2" fill="#f4f4f4" stroke="#2c2c2c" stroke-width="1"/><path d="M78 6.3 L85.5 11.2 M85.5 6.3 L78 11.2" stroke="#363636" stroke-width="3.8" stroke-linecap="round"/><path d="M78 6.3 L85.5 11.2 M85.5 6.3 L78 11.2" stroke="#ececec" stroke-width="1.9" stroke-linecap="round"/></svg>
<div class="t" style="left:32px;top:56px;font-size:12px;line-height:12px;font-weight:normal;color:#434e5a;letter-spacing:-0.010px;transform:scaleX(0.893);transform-origin:0 0;">1305 PROSPERITY AVE - PROSPERITY HGTS [CO]</div>
<div class="a" style="left:10px;top:102px;width:1012px;height:572px;background:#f0f0f0;"></div>
<div class="a" style="left:10px;top:102px;width:1012px;height:1px;background:#fff;"></div>
<div class="a" style="left:10px;top:102px;width:1px;height:572px;background:#fff;"></div>
<div class="a" style="left:11px;top:103px;width:1px;height:570px;background:#e3e3e3;"></div>
<div class="a" style="left:11px;top:103px;width:1010px;height:1px;background:#e3e3e3;"></div>
<div class="a" style="left:1020px;top:102px;width:1px;height:571px;background:#a0a0a0;"></div>
<div class="a" style="left:1021px;top:102px;width:1px;height:572px;background:#696969;"></div>
<div class="a" style="left:11px;top:672px;width:1010px;height:1px;background:#a0a0a0;"></div>
<div class="a" style="left:10px;top:673px;width:1012px;height:1px;background:#696969;"></div>
<div class="a" style="left:13px;top:79px;width:52px;height:23px;background:#f0f0f0;"></div>
<div class="a" style="left:13px;top:79px;width:51px;height:1px;background:#fff;"></div>
<div class="a" style="left:13px;top:79px;width:1px;height:23px;background:#fff;"></div>
<div class="a" style="left:63px;top:80px;width:1px;height:22px;background:#a0a0a0;"></div>
<div class="a" style="left:64px;top:80px;width:1px;height:22px;background:#696969;"></div>
<div class="t" style="left:18px;top:84px;font-size:13px;line-height:13px;font-weight:normal;color:#000;letter-spacing:-0.141px;">Folder</div>
<div class="a" style="left:65px;top:79px;width:66px;height:23px;background:#f0f0f0;"></div>
<div class="a" style="left:65px;top:79px;width:65px;height:1px;background:#fff;"></div>
<div class="a" style="left:65px;top:79px;width:1px;height:23px;background:#fff;"></div>
<div class="a" style="left:129px;top:80px;width:1px;height:22px;background:#a0a0a0;"></div>
<div class="a" style="left:130px;top:80px;width:1px;height:22px;background:#696969;"></div>
<div class="t" style="left:71px;top:84px;font-size:13px;line-height:13px;font-weight:normal;color:#000;letter-spacing:-0.141px;">Property</div>
<div class="a" style="left:131px;top:79px;width:57px;height:23px;background:#f0f0f0;"></div>
<div class="a" style="left:131px;top:79px;width:56px;height:1px;background:#fff;"></div>
<div class="a" style="left:131px;top:79px;width:1px;height:23px;background:#fff;"></div>
<div class="a" style="left:186px;top:80px;width:1px;height:22px;background:#a0a0a0;"></div>
<div class="a" style="left:187px;top:80px;width:1px;height:22px;background:#696969;"></div>
<div class="t" style="left:137px;top:84px;font-size:13px;line-height:13px;font-weight:normal;color:#000;letter-spacing:-0.080px;">People</div>
<div class="a" style="left:188px;top:79px;width:35px;height:23px;background:#f0f0f0;"></div>
<div class="a" style="left:188px;top:79px;width:34px;height:1px;background:#fff;"></div>
<div class="a" style="left:188px;top:79px;width:1px;height:23px;background:#fff;"></div>
<div class="t" style="left:194px;top:84px;font-size:13px;line-height:13px;font-weight:normal;color:#000;letter-spacing:0.079px;">Info</div>
<div class="a" style="left:312px;top:79px;width:59px;height:23px;background:#f0f0f0;"></div>
<div class="a" style="left:312px;top:79px;width:58px;height:1px;background:#fff;"></div>
<div class="a" style="left:312px;top:79px;width:1px;height:23px;background:#fff;"></div>
<div class="a" style="left:369px;top:80px;width:1px;height:22px;background:#a0a0a0;"></div>
<div class="a" style="left:370px;top:80px;width:1px;height:22px;background:#696969;"></div>
<div class="t" style="left:316px;top:84px;font-size:13px;line-height:13px;font-weight:normal;color:#000;letter-spacing:-0.280px;">Process</div>
<div class="a" style="left:371px;top:79px;width:76px;height:23px;background:#f0f0f0;"></div>
<div class="a" style="left:371px;top:79px;width:75px;height:1px;background:#fff;"></div>
<div class="a" style="left:371px;top:79px;width:1px;height:23px;background:#fff;"></div>
<div class="a" style="left:445px;top:80px;width:1px;height:22px;background:#a0a0a0;"></div>
<div class="a" style="left:446px;top:80px;width:1px;height:22px;background:#696969;"></div>
<div class="t" style="left:377px;top:84px;font-size:13px;line-height:13px;font-weight:normal;color:#000;letter-spacing:-0.156px;">Document</div>
<div class="a" style="left:447px;top:79px;width:72px;height:23px;background:#f0f0f0;"></div>
<div class="a" style="left:447px;top:79px;width:71px;height:1px;background:#fff;"></div>
<div class="a" style="left:447px;top:79px;width:1px;height:23px;background:#fff;"></div>
<div class="a" style="left:517px;top:80px;width:1px;height:22px;background:#a0a0a0;"></div>
<div class="a" style="left:518px;top:80px;width:1px;height:22px;background:#696969;"></div>
<div class="t" style="left:453px;top:84px;font-size:13px;line-height:13px;font-weight:normal;color:#000;letter-spacing:-0.050px;">Comment</div>
<div class="a" style="left:519px;top:79px;width:85px;height:23px;background:#f0f0f0;"></div>
<div class="a" style="left:519px;top:79px;width:84px;height:1px;background:#fff;"></div>
<div class="a" style="left:519px;top:79px;width:1px;height:23px;background:#fff;"></div>
<div class="a" style="left:602px;top:80px;width:1px;height:22px;background:#a0a0a0;"></div>
<div class="a" style="left:603px;top:80px;width:1px;height:22px;background:#696969;"></div>
<div class="t" style="left:525px;top:84px;font-size:13px;line-height:13px;font-weight:normal;color:#000;letter-spacing:0.024px;">Attachment</div>
<div class="a" style="left:223px;top:77px;width:89px;height:26px;background:#f0f0f0;"></div>
<div class="a" style="left:223px;top:77px;width:88px;height:1px;background:#fff;"></div>
<div class="a" style="left:223px;top:77px;width:1px;height:26px;background:#fff;"></div>
<div class="a" style="left:310px;top:78px;width:1px;height:25px;background:#a0a0a0;"></div>
<div class="a" style="left:311px;top:78px;width:1px;height:25px;background:#696969;"></div>
<div class="t" style="left:230px;top:82px;font-size:13.4px;line-height:13.4px;font-weight:bold;color:#000;">Fee/Charge</div>
<div class="a" style="left:14px;top:142px;width:235px;height:526px;background:#fff;"></div>
<div class="a" style="left:14px;top:142px;width:235px;height:1px;background:#a0a0a0;"></div>
<div class="a" style="left:14px;top:142px;width:1px;height:526px;background:#a0a0a0;"></div>
<div class="a" style="left:15px;top:143px;width:234px;height:1px;background:#696969;"></div>
<div class="a" style="left:15px;top:143px;width:1px;height:525px;background:#696969;"></div>
<div class="a" style="left:248px;top:142px;width:1px;height:526px;background:#fff;"></div>
<div class="a" style="left:38px;top:146px;width:159px;height:16px;background:#f0f0f0;border-top:1px solid #fff;box-sizing:border-box;"></div>
<div class="a" style="left:198px;top:146px;width:50px;height:16px;background:#f0f0f0;border-top:1px solid #fff;box-sizing:border-box;"></div>
<div class="a" style="left:38px;top:162px;width:210px;height:2px;background:#6d6d6d;"></div>
<div class="t" style="left:-182.241px;width:600px;text-align:center;top:147px;font-size:14px;line-height:14px;font-weight:normal;color:#000;letter-spacing:-0.483px;">Folder #</div>
<div class="t" style="right:1056.170px;top:147px;font-size:14px;line-height:14px;font-weight:normal;color:#000;letter-spacing:-1.170px;">Ref</div>
<div class="a" style="left:29px;top:144px;width:1px;height:524px;background:#ececec;"></div>
<div class="a" style="left:197px;top:144px;width:1px;height:524px;background:#ececec;"></div>
<div class="a" style="left:16px;top:164px;width:232px;height:1px;background:#ececec;"></div>
<div class="a" style="left:31px;top:166px;width:6px;height:16px;background:#00ffff;"></div>
<div class="t" style="left:39px;top:168px;font-size:13px;line-height:13px;font-weight:normal;color:#000;letter-spacing:-0.352px;">1980 005823 000 00 CO</div>
<div class="t" style="left:199px;top:168px;font-size:13px;line-height:13px;font-weight:normal;color:#000;letter-spacing:-0.230px;">21733</div>
<div class="a" style="left:16px;top:182px;width:232px;height:1px;background:#ececec;"></div>
<div class="a" style="left:31px;top:184px;width:6px;height:16px;background:#00ffff;"></div>
<div class="t" style="left:39px;top:186px;font-size:13px;line-height:13px;font-weight:normal;color:#000;letter-spacing:-0.352px;">1980 015820 000 00 CO</div>
<div class="t" style="left:199px;top:186px;font-size:13px;line-height:13px;font-weight:normal;color:#000;letter-spacing:-0.230px;">21733</div>
<div class="a" style="left:16px;top:200px;width:232px;height:1px;background:#ececec;"></div>
<div class="a" style="left:31px;top:202px;width:6px;height:16px;background:#00ffff;"></div>
<div class="t" style="left:39px;top:204px;font-size:13px;line-height:13px;font-weight:normal;color:#000;letter-spacing:-0.352px;">2001 023313 000 00 CO</div>
<div class="t" style="left:199px;top:204px;font-size:13px;line-height:13px;font-weight:normal;color:#000;letter-spacing:-0.230px;">21733</div>
<div class="a" style="left:16px;top:218px;width:232px;height:1px;background:#ececec;"></div>
<div class="a" style="left:31px;top:220px;width:6px;height:16px;background:#c0c0c0;"></div>
<div class="t" style="left:39px;top:222px;font-size:13px;line-height:13px;font-weight:normal;color:#000;letter-spacing:-0.381px;">2001 204306 EDU 00 PS</div>
<div class="t" style="left:199px;top:222px;font-size:13px;line-height:13px;font-weight:normal;color:#000;letter-spacing:-0.230px;">21733</div>
<div class="a" style="left:16px;top:236px;width:232px;height:1px;background:#ececec;"></div>
<div class="a" style="left:31px;top:238px;width:6px;height:16px;background:#00ffff;"></div>
<div class="t" style="left:39px;top:240px;font-size:13px;line-height:13px;font-weight:normal;color:#000;letter-spacing:-0.352px;">2002 216899 000 00 CO</div>
<div class="t" style="left:199px;top:240px;font-size:13px;line-height:13px;font-weight:normal;color:#000;letter-spacing:-0.230px;">21733</div>
<div class="a" style="left:16px;top:254px;width:232px;height:1px;background:#ececec;"></div>
<div class="a" style="left:31px;top:256px;width:6px;height:16px;background:#ffff00;"></div>
<div class="t" style="left:39px;top:258px;font-size:13px;line-height:13px;font-weight:normal;color:#000;letter-spacing:-0.344px;">2004 070253 000 00 RF</div>
<div class="t" style="left:199px;top:258px;font-size:13px;line-height:13px;font-weight:normal;color:#000;letter-spacing:-0.230px;">21733</div>
<div class="a" style="left:16px;top:272px;width:232px;height:1px;background:#ececec;"></div>
<div class="a" style="left:31px;top:274px;width:6px;height:16px;background:#00ffff;"></div>
<div class="t" style="left:39px;top:276px;font-size:13px;line-height:13px;font-weight:normal;color:#000;letter-spacing:-0.352px;">2005 150204 000 00 CO</div>
<div class="t" style="left:199px;top:276px;font-size:13px;line-height:13px;font-weight:normal;color:#000;letter-spacing:-0.230px;">21733</div>
<div class="a" style="left:16px;top:290px;width:232px;height:1px;background:#ececec;"></div>
<div class="a" style="left:31px;top:292px;width:6px;height:16px;background:#ffff00;"></div>
<div class="t" style="left:39px;top:294px;font-size:13px;line-height:13px;font-weight:normal;color:#000;letter-spacing:-0.344px;">2005 150205 000 00 RF</div>
<div class="t" style="left:199px;top:294px;font-size:13px;line-height:13px;font-weight:normal;color:#000;letter-spacing:-0.230px;">21733</div>
<div class="a" style="left:16px;top:308px;width:232px;height:1px;background:#ececec;"></div>
<div class="a" style="left:31px;top:310px;width:6px;height:16px;background:#ffff00;"></div>
<div class="t" style="left:39px;top:312px;font-size:13px;line-height:13px;font-weight:normal;color:#000;letter-spacing:-0.344px;">2007 113449 000 00 RF</div>
<div class="t" style="left:199px;top:312px;font-size:13px;line-height:13px;font-weight:normal;color:#000;letter-spacing:-0.230px;">21733</div>
<div class="a" style="left:16px;top:326px;width:232px;height:1px;background:#ececec;"></div>
<div class="a" style="left:16px;top:327px;width:232px;height:17px;background:#3399ff;"></div>
<div class="a" style="left:29px;top:327px;width:1px;height:17px;background:#fff;"></div>
<div class="a" style="left:197px;top:327px;width:1px;height:17px;background:#fff;"></div>
<div class="a" style="left:31px;top:328px;width:6px;height:16px;background:#3399ff;"></div>
<div class="t" style="left:39px;top:330px;font-size:13px;line-height:13px;font-weight:normal;color:#fff;letter-spacing:-0.352px;">2008 154705 000 00 CO</div>
<div class="t" style="left:199px;top:330px;font-size:13px;line-height:13px;font-weight:normal;color:#fff;letter-spacing:-0.230px;">21733</div>
<div class="a" style="left:16px;top:344px;width:232px;height:1px;background:#ececec;"></div>
<div class="a" style="left:31px;top:346px;width:6px;height:16px;background:#ffff00;"></div>
<div class="t" style="left:39px;top:348px;font-size:13px;line-height:13px;font-weight:normal;color:#000;letter-spacing:-0.344px;">2008 154706 000 00 RF</div>
<div class="t" style="left:199px;top:348px;font-size:13px;line-height:13px;font-weight:normal;color:#000;letter-spacing:-0.230px;">21733</div>
<div class="a" style="left:16px;top:362px;width:232px;height:1px;background:#ececec;"></div>
<div class="a" style="left:31px;top:364px;width:6px;height:16px;background:#c00000;"></div>
<div class="a" style="left:254px;top:142px;width:760px;height:496px;background:#f0f0f0;"></div>
<div class="a" style="left:254px;top:142px;width:760px;height:1px;background:#a0a0a0;"></div>
<div class="a" style="left:254px;top:142px;width:1px;height:496px;background:#a0a0a0;"></div>
<div class="a" style="left:255px;top:143px;width:758px;height:1px;background:#696969;"></div>
<div class="a" style="left:255px;top:143px;width:1px;height:495px;background:#696969;"></div>
<div class="a" style="left:1013px;top:142px;width:1px;height:496px;background:#fff;"></div>
<div class="t" style="left:261px;top:153px;font-size:14px;line-height:14px;font-weight:bold;color:#000;letter-spacing:0.223px;">Folder:</div>
<div class="t" style="left:320px;top:153px;font-size:14px;line-height:14px;font-weight:bold;color:#000;letter-spacing:0.097px;">08 154705 000 00 CO</div>
<div class="t" style="left:135.870px;width:600px;text-align:center;top:173px;font-size:14px;line-height:14px;font-weight:normal;color:#000;letter-spacing:-0.260px;">Fee Code / Description</div>
<div class="t" style="left:387.824px;width:600px;text-align:center;top:173px;font-size:14px;line-height:14px;font-weight:normal;color:#000;letter-spacing:-0.351px;">Fee Amount</div>
<div class="t" style="left:494.853px;width:600px;text-align:center;top:173px;font-size:14px;line-height:14px;font-weight:normal;color:#000;letter-spacing:-0.294px;">Mandatory</div>
<div class="t" style="left:566.881px;width:600px;text-align:center;top:173px;font-size:14px;line-height:14px;font-weight:normal;color:#000;letter-spacing:-0.238px;">Bill Number</div>
<div class="t" style="left:644.681px;width:600px;text-align:center;top:173px;font-size:14px;line-height:14px;font-weight:normal;color:#000;letter-spacing:-0.638px;">Paid In Full ?</div>
<div class="t" style="left:988px;top:173px;font-size:14px;line-height:14px;font-weight:normal;color:#000;width:25px;overflow:hidden;">Com</div>
<div class="a" style="left:259px;top:188px;width:355px;height:1px;background:#000;"></div>
<div class="a" style="left:618px;top:188px;width:140px;height:1px;background:#000;"></div>
<div class="a" style="left:763px;top:188px;width:64px;height:1px;background:#000;"></div>
<div class="a" style="left:832px;top:188px;width:71px;height:1px;background:#000;"></div>
<div class="a" style="left:908px;top:188px;width:75px;height:1px;background:#000;"></div>
<div class="a" style="left:988px;top:188px;width:25px;height:1px;background:#000;"></div>
<div class="a" style="left:256px;top:190px;width:757px;height:25px;background:#3399ff;"></div>
<div class="a" style="left:258px;top:192px;width:359px;height:1px;background:#a0a0a0;"></div>
<div class="a" style="left:258px;top:192px;width:1px;height:23px;background:#a0a0a0;"></div>
<div class="a" style="left:259px;top:193px;width:357px;height:1px;background:#696969;"></div>
<div class="a" style="left:259px;top:193px;width:1px;height:21px;background:#696969;"></div>
<div class="a" style="left:259px;top:213px;width:357px;height:1px;background:#e3e3e3;"></div>
<div class="a" style="left:615px;top:193px;width:1px;height:21px;background:#e3e3e3;"></div>
<div class="a" style="left:258px;top:214px;width:359px;height:1px;background:#fff;"></div>
<div class="a" style="left:616px;top:192px;width:1px;height:23px;background:#fff;"></div>
<div class="a" style="left:617px;top:192px;width:144px;height:1px;background:#a0a0a0;"></div>
<div class="a" style="left:617px;top:192px;width:1px;height:23px;background:#a0a0a0;"></div>
<div class="a" style="left:618px;top:193px;width:142px;height:1px;background:#696969;"></div>
<div class="a" style="left:618px;top:193px;width:1px;height:21px;background:#696969;"></div>
<div class="a" style="left:618px;top:213px;width:142px;height:1px;background:#e3e3e3;"></div>
<div class="a" style="left:759px;top:193px;width:1px;height:21px;background:#e3e3e3;"></div>
<div class="a" style="left:617px;top:214px;width:144px;height:1px;background:#fff;"></div>
<div class="a" style="left:760px;top:192px;width:1px;height:23px;background:#fff;"></div>
<div class="a" style="left:761px;top:192px;width:68px;height:1px;background:#a0a0a0;"></div>
<div class="a" style="left:761px;top:192px;width:1px;height:23px;background:#a0a0a0;"></div>
<div class="a" style="left:762px;top:193px;width:66px;height:1px;background:#696969;"></div>
<div class="a" style="left:762px;top:193px;width:1px;height:21px;background:#696969;"></div>
<div class="a" style="left:762px;top:213px;width:66px;height:1px;background:#e3e3e3;"></div>
<div class="a" style="left:827px;top:193px;width:1px;height:21px;background:#e3e3e3;"></div>
<div class="a" style="left:761px;top:214px;width:68px;height:1px;background:#fff;"></div>
<div class="a" style="left:828px;top:192px;width:1px;height:23px;background:#fff;"></div>
<div class="a" style="left:986px;top:192px;width:28px;height:1px;background:#a0a0a0;"></div>
<div class="a" style="left:986px;top:192px;width:1px;height:23px;background:#a0a0a0;"></div>
<div class="a" style="left:987px;top:193px;width:26px;height:1px;background:#696969;"></div>
<div class="a" style="left:987px;top:193px;width:1px;height:21px;background:#696969;"></div>
<div class="a" style="left:987px;top:213px;width:26px;height:1px;background:#e3e3e3;"></div>
<div class="a" style="left:1012px;top:193px;width:1px;height:21px;background:#e3e3e3;"></div>
<div class="a" style="left:986px;top:214px;width:28px;height:1px;background:#fff;"></div>
<div class="a" style="left:1013px;top:192px;width:1px;height:23px;background:#fff;"></div>
<div class="t" style="left:260px;top:195px;font-size:14px;line-height:14px;font-weight:bold;color:#fff;letter-spacing:0.165px;">CO Commercial Initial Fee</div>
<div class="t" style="right:544.801px;top:195px;font-size:14px;line-height:14px;font-weight:bold;color:#fff;letter-spacing:0.199px;">$700.00</div>
<div class="t" style="left:494.000px;width:600px;text-align:center;top:196px;font-size:13.5px;line-height:13.5px;font-weight:normal;color:#fff;">Yes</div>
<div class="t" style="right:399.230px;top:196px;font-size:13px;line-height:13px;font-weight:normal;color:#fff;letter-spacing:-0.230px;">1084717</div>
<div class="t" style="left:908px;top:196px;font-size:13.5px;line-height:13.5px;font-weight:normal;color:#fff;">Yes</div>
<div class="t" style="right:689.684px;top:218px;font-size:14px;line-height:14px;font-weight:bold;color:#000;letter-spacing:0.316px;">Total:</div>
<div class="t" style="right:689.794px;top:237px;font-size:14px;line-height:14px;font-weight:bold;color:#000;letter-spacing:0.206px;">(Excluding Cancelled and Void Bills):</div>
<div class="t" style="right:544.801px;top:218px;font-size:14px;line-height:14px;font-weight:bold;color:#000;letter-spacing:0.199px;">$700.00</div>
<div class="t" style="right:544.801px;top:237px;font-size:14px;line-height:14px;font-weight:bold;color:#000;letter-spacing:0.199px;">$700.00</div>
<div class="a" style="left:593px;top:581px;width:12px;height:1px;background:#6d6d6d;"></div>
<div class="a" style="left:593px;top:582px;width:12px;height:14px;background:linear-gradient(#f4f4f4,#d8d8d8 60%,#c4c4c4 80%,#e8e8e8);"></div>
<div class="a" style="left:593px;top:596px;width:12px;height:1px;background:#fff;"></div>
<div class="a" style="left:593px;top:606px;width:12px;height:1px;background:#a0a0a0;"></div>
<div class="a" style="left:593px;top:617px;width:12px;height:1px;background:#fff;"></div>
<div class="t" style="left:592px;top:622px;font-size:12px;line-height:12px;font-weight:normal;color:#000;letter-spacing:0.109px;">w 0</div>
<div class="a" style="left:593px;top:637px;width:12px;height:2px;background:#6d6d6d;"></div>
<div class="a win" style="left:14px;top:366px;width:577px;height:310px;"></div>
<div class="a" style="left:22px;top:396px;width:563px;height:274px;background:#fff;"></div>
<svg class="a" style="left:24px;top:376px" width="16" height="16" viewBox="0 0 16 16" shape-rendering="crispEdges"><rect x="0" y="0" width="16" height="16" fill="#fff"/><rect x="0" y="2" width="14" height="12" fill="#808000"/><rect x="1" y="0" width="5" height="2" fill="#000"/><rect x="6" y="1" width="1" height="1" fill="#000"/><rect x="14" y="2" width="1" height="13" fill="#000"/><rect x="2" y="14" width="13" height="1" fill="#000"/></svg>
<div class="a tbtn" style="left:486px;top:376px;"></div>
<div class="a tbtn" style="left:519px;top:376px;"></div>
<div class="a tbtn" style="left:552px;top:376px;"></div>
<svg class="a" style="left:486px;top:376px" width="99" height="17" viewBox="0 0 99 17"><rect x="10.5" y="8.5" width="10" height="4" rx="1.6" fill="#ececec" stroke="#363636" stroke-width="1"/><rect x="43.5" y="4.5" width="10" height="8" rx="1.2" fill="#ececec" stroke="#363636" stroke-width="1.15"/><rect x="46.5" y="7.5" width="4" height="2" fill="#f4f4f4" stroke="#2c2c2c" stroke-width="1"/><path d="M78 6.3 L85.5 11.2 M85.5 6.3 L78 11.2" stroke="#363636" stroke-width="3.8" stroke-linecap="round"/><path d="M78 6.3 L85.5 11.2 M85.5 6.3 L78 11.2" stroke="#ececec" stroke-width="1.9" stroke-linecap="round"/></svg>
<div class="t" style="left:44px;top:379px;font-size:12px;line-height:12px;font-weight:normal;color:#434e5a;letter-spacing:0.119px;transform:scaleX(0.893);transform-origin:0 0;">Bill ( from 1305 PROSPERITY AVE - PROSPERITY HGTS [CO] )</div>
<div class="t" style="right:1173.437px;top:409px;font-size:14px;line-height:14px;font-weight:normal;color:#000;letter-spacing:-0.437px;">Bill Number:</div>
<div class="t" style="right:1173.590px;top:438px;font-size:14px;line-height:14px;font-weight:normal;color:#000;letter-spacing:-0.590px;">Folder Number:</div>
<div class="t" style="right:1173.308px;top:467px;font-size:14px;line-height:14px;font-weight:normal;color:#000;letter-spacing:-0.308px;">Bill Amount:</div>
<div class="t" style="right:1173.357px;top:496px;font-size:14px;line-height:14px;font-weight:normal;color:#000;letter-spacing:-0.357px;">Total Paid:</div>
<div class="t" style="right:1173.576px;top:526px;font-size:14px;line-height:14px;font-weight:normal;color:#000;letter-spacing:-0.576px;">Description:</div>
<div class="t" style="right:1173.441px;top:555px;font-size:14px;line-height:14px;font-weight:normal;color:#000;letter-spacing:-0.441px;">Data Modified By:</div>
<div class="a" style="left:137px;top:406px;width:76px;height:21px;background:#fff;"></div>
<div class="a" style="left:137px;top:406px;width:75px;height:1px;background:#a0a0a0;"></div>
<div class="a" style="left:137px;top:406px;width:1px;height:20px;background:#a0a0a0;"></div>
<div class="a" style="left:138px;top:407px;width:73px;height:1px;background:#696969;"></div>
<div class="a" style="left:138px;top:407px;width:1px;height:18px;background:#696969;"></div>
<div class="a" style="left:137px;top:426px;width:76px;height:1px;background:#e3e3e3;"></div>
<div class="a" style="left:212px;top:406px;width:1px;height:21px;background:#e3e3e3;"></div>
<div class="t" style="left:139px;top:409px;font-size:14px;line-height:14px;font-weight:normal;color:#000;letter-spacing:-0.786px;">1084717</div>
<div class="a" style="left:137px;top:435px;width:218px;height:21px;background:#fff;"></div>
<div class="a" style="left:137px;top:435px;width:217px;height:1px;background:#a0a0a0;"></div>
<div class="a" style="left:137px;top:435px;width:1px;height:20px;background:#a0a0a0;"></div>
<div class="a" style="left:138px;top:436px;width:215px;height:1px;background:#696969;"></div>
<div class="a" style="left:138px;top:436px;width:1px;height:18px;background:#696969;"></div>
<div class="a" style="left:137px;top:455px;width:218px;height:1px;background:#e3e3e3;"></div>
<div class="a" style="left:354px;top:435px;width:1px;height:21px;background:#e3e3e3;"></div>
<div class="t" style="left:139px;top:438px;font-size:14px;line-height:14px;font-weight:normal;color:#000;letter-spacing:-0.620px;">08 154705 000 00 CO</div>
<div class="a" style="left:137px;top:464px;width:76px;height:21px;background:#fff;"></div>
<div class="a" style="left:137px;top:464px;width:75px;height:1px;background:#a0a0a0;"></div>
<div class="a" style="left:137px;top:464px;width:1px;height:20px;background:#a0a0a0;"></div>
<div class="a" style="left:138px;top:465px;width:73px;height:1px;background:#696969;"></div>
<div class="a" style="left:138px;top:465px;width:1px;height:18px;background:#696969;"></div>
<div class="a" style="left:137px;top:484px;width:76px;height:1px;background:#e3e3e3;"></div>
<div class="a" style="left:212px;top:464px;width:1px;height:21px;background:#e3e3e3;"></div>
<div class="t" style="right:1090.658px;top:467px;font-size:14px;line-height:14px;font-weight:normal;color:#000;letter-spacing:-0.658px;">$700.00</div>
<div class="a" style="left:137px;top:493px;width:76px;height:21px;background:#fff;"></div>
<div class="a" style="left:137px;top:493px;width:75px;height:1px;background:#a0a0a0;"></div>
<div class="a" style="left:137px;top:493px;width:1px;height:20px;background:#a0a0a0;"></div>
<div class="a" style="left:138px;top:494px;width:73px;height:1px;background:#696969;"></div>
<div class="a" style="left:138px;top:494px;width:1px;height:18px;background:#696969;"></div>
<div class="a" style="left:137px;top:513px;width:76px;height:1px;background:#e3e3e3;"></div>
<div class="a" style="left:212px;top:493px;width:1px;height:21px;background:#e3e3e3;"></div>
<div class="t" style="right:1090.658px;top:496px;font-size:14px;line-height:14px;font-weight:normal;color:#000;letter-spacing:-0.658px;">$700.00</div>
<div class="t" style="right:995.371px;top:496px;font-size:14px;line-height:14px;font-weight:normal;color:#000;letter-spacing:-0.371px;">Paid In Full?</div>
<div class="a" style="left:315px;top:493px;width:66px;height:21px;background:#fff;"></div>
<div class="a" style="left:315px;top:493px;width:65px;height:1px;background:#a0a0a0;"></div>
<div class="a" style="left:315px;top:493px;width:1px;height:20px;background:#a0a0a0;"></div>
<div class="a" style="left:316px;top:494px;width:63px;height:1px;background:#696969;"></div>
<div class="a" style="left:316px;top:494px;width:1px;height:18px;background:#696969;"></div>
<div class="a" style="left:315px;top:513px;width:66px;height:1px;background:#e3e3e3;"></div>
<div class="a" style="left:380px;top:493px;width:1px;height:21px;background:#e3e3e3;"></div>
<div class="t" style="left:317px;top:496px;font-size:14px;line-height:14px;font-weight:normal;color:#000;letter-spacing:-0.708px;">Yes</div>
<div class="a" style="left:137px;top:523px;width:419px;height:21px;background:#fff;"></div>
<div class="a" style="left:137px;top:523px;width:418px;height:1px;background:#a0a0a0;"></div>
<div class="a" style="left:137px;top:523px;width:1px;height:20px;background:#a0a0a0;"></div>
<div class="a" style="left:138px;top:524px;width:416px;height:1px;background:#696969;"></div>
<div class="a" style="left:138px;top:524px;width:1px;height:18px;background:#696969;"></div>
<div class="a" style="left:137px;top:543px;width:419px;height:1px;background:#e3e3e3;"></div>
<div class="a" style="left:555px;top:523px;width:1px;height:21px;background:#e3e3e3;"></div>
<div class="t" style="left:139px;top:526px;font-size:14px;line-height:14px;font-weight:normal;color:#000;letter-spacing:-0.590px;">Folder 08 154705 000 00 CO</div>
<div class="a" style="left:137px;top:552px;width:147px;height:20px;background:#fff;"></div>
<div class="a" style="left:137px;top:552px;width:146px;height:1px;background:#a0a0a0;"></div>
<div class="a" style="left:137px;top:552px;width:1px;height:19px;background:#a0a0a0;"></div>
<div class="a" style="left:138px;top:553px;width:144px;height:1px;background:#696969;"></div>
<div class="a" style="left:138px;top:553px;width:1px;height:17px;background:#696969;"></div>
<div class="a" style="left:137px;top:571px;width:147px;height:1px;background:#e3e3e3;"></div>
<div class="a" style="left:283px;top:552px;width:1px;height:20px;background:#e3e3e3;"></div>
<div class="t" style="left:139px;top:555px;font-size:14px;line-height:14px;font-weight:normal;color:#000;letter-spacing:-0.452px;">STAMP, Property Admin</div>
<div class="a" style="left:292px;top:552px;width:142px;height:20px;background:#fff;"></div>
<div class="a" style="left:292px;top:552px;width:141px;height:1px;background:#a0a0a0;"></div>
<div class="a" style="left:292px;top:552px;width:1px;height:19px;background:#a0a0a0;"></div>
<div class="a" style="left:293px;top:553px;width:139px;height:1px;background:#696969;"></div>
<div class="a" style="left:293px;top:553px;width:1px;height:17px;background:#696969;"></div>
<div class="a" style="left:292px;top:571px;width:142px;height:1px;background:#e3e3e3;"></div>
<div class="a" style="left:433px;top:552px;width:1px;height:20px;background:#e3e3e3;"></div>
<div class="t" style="left:294px;top:555px;font-size:14px;line-height:14px;font-weight:normal;color:#000;letter-spacing:-0.607px;">12/13/2013</div>
<div class="t" style="right:840.567px;top:409px;font-size:14px;line-height:14px;font-weight:normal;color:#000;letter-spacing:-0.567px;">Date Generated:</div>
<div class="t" style="right:840.559px;top:438px;font-size:14px;line-height:14px;font-weight:normal;color:#000;letter-spacing:-0.559px;">Due Date:</div>
<div class="t" style="right:840.532px;top:467px;font-size:14px;line-height:14px;font-weight:normal;color:#000;letter-spacing:-0.532px;">Outstanding:</div>
<div class="a" style="left:469px;top:406px;width:86px;height:21px;background:#fff;"></div>
<div class="a" style="left:469px;top:406px;width:85px;height:1px;background:#a0a0a0;"></div>
<div class="a" style="left:469px;top:406px;width:1px;height:20px;background:#a0a0a0;"></div>
<div class="a" style="left:470px;top:407px;width:83px;height:1px;background:#696969;"></div>
<div class="a" style="left:470px;top:407px;width:1px;height:18px;background:#696969;"></div>
<div class="a" style="left:469px;top:426px;width:86px;height:1px;background:#e3e3e3;"></div>
<div class="a" style="left:554px;top:406px;width:1px;height:21px;background:#e3e3e3;"></div>
<div class="t" style="left:472px;top:409px;font-size:14px;line-height:14px;font-weight:normal;color:#000;letter-spacing:-0.607px;">12/13/2013</div>
<div class="a" style="left:469px;top:435px;width:86px;height:21px;background:#fff;"></div>
<div class="a" style="left:469px;top:435px;width:85px;height:1px;background:#a0a0a0;"></div>
<div class="a" style="left:469px;top:435px;width:1px;height:20px;background:#a0a0a0;"></div>
<div class="a" style="left:470px;top:436px;width:83px;height:1px;background:#696969;"></div>
<div class="a" style="left:470px;top:436px;width:1px;height:18px;background:#696969;"></div>
<div class="a" style="left:469px;top:455px;width:86px;height:1px;background:#e3e3e3;"></div>
<div class="a" style="left:554px;top:435px;width:1px;height:21px;background:#e3e3e3;"></div>
<div class="a" style="left:469px;top:464px;width:86px;height:21px;background:#fff;"></div>
<div class="a" style="left:469px;top:464px;width:85px;height:1px;background:#a0a0a0;"></div>
<div class="a" style="left:469px;top:464px;width:1px;height:20px;background:#a0a0a0;"></div>
<div class="a" style="left:470px;top:465px;width:83px;height:1px;background:#696969;"></div>
<div class="a" style="left:470px;top:465px;width:1px;height:18px;background:#696969;"></div>
<div class="a" style="left:469px;top:484px;width:86px;height:1px;background:#e3e3e3;"></div>
<div class="a" style="left:554px;top:464px;width:1px;height:21px;background:#e3e3e3;"></div>
<div class="t" style="right:748.607px;top:467px;font-size:14px;line-height:14px;font-weight:bold;color:#000;letter-spacing:-0.607px;">$0.00</div>
<div class="a" style="left:28px;top:650px;width:108px;height:20px;background:#f0f0f0;"></div>
<div class="a" style="left:28px;top:650px;width:107px;height:1px;background:#fff;"></div>
<div class="a" style="left:28px;top:650px;width:1px;height:20px;background:#fff;"></div>
<div class="a" style="left:134px;top:651px;width:1px;height:19px;background:#a0a0a0;"></div>
<div class="a" style="left:135px;top:650px;width:1px;height:20px;background:#696969;"></div>
<div class="t" style="left:33px;top:655px;font-size:14px;line-height:14px;font-weight:normal;color:#000;letter-spacing:-0.529px;">Payment Details</div>
<div class="a" style="left:153px;top:650px;width:55px;height:20px;background:#f0f0f0;"></div>
<div class="a" style="left:153px;top:650px;width:54px;height:1px;background:#fff;"></div>
<div class="a" style="left:153px;top:650px;width:1px;height:20px;background:#fff;"></div>
<div class="a" style="left:206px;top:651px;width:1px;height:19px;background:#a0a0a0;"></div>
<div class="a" style="left:207px;top:650px;width:1px;height:20px;background:#696969;"></div>
<div class="t" style="left:165px;top:655px;font-size:14px;line-height:14px;font-weight:normal;color:#000;letter-spacing:-0.781px;">Fees</div>
<div class="a" style="left:226px;top:650px;width:56px;height:20px;background:#f0f0f0;"></div>
<div class="a" style="left:226px;top:650px;width:55px;height:1px;background:#fff;"></div>
<div class="a" style="left:226px;top:650px;width:1px;height:20px;background:#fff;"></div>
<div class="a" style="left:280px;top:651px;width:1px;height:19px;background:#a0a0a0;"></div>
<div class="a" style="left:281px;top:650px;width:1px;height:20px;background:#696969;"></div>
<div class="t" style="left:234px;top:655px;font-size:14px;line-height:14px;font-weight:normal;color:#000;letter-spacing:-0.614px;">Folder</div>
<div class="a" style="left:298px;top:650px;width:61px;height:20px;background:#f0f0f0;"></div>
<div class="a" style="left:298px;top:650px;width:60px;height:1px;background:#fff;"></div>
<div class="a" style="left:298px;top:650px;width:1px;height:20px;background:#fff;"></div>
<div class="a" style="left:357px;top:651px;width:1px;height:19px;background:#a0a0a0;"></div>
<div class="a" style="left:358px;top:650px;width:1px;height:20px;background:#696969;"></div>
<div class="t" style="left:303px;top:655px;font-size:14px;line-height:14px;font-weight:normal;color:#000;letter-spacing:-0.234px;">Print Bill</div>
<div class="t" style="left:438px;top:654px;font-size:14px;line-height:14px;font-weight:normal;color:#0000ff;letter-spacing:-0.786px;">1</div>
<div class="t" style="left:466px;top:654px;font-size:14px;line-height:14px;font-weight:normal;color:#0000ff;letter-spacing:-0.542px;">Row Returned</div>
<div class="a win" style="left:605px;top:347px;width:582px;height:387px;"></div>
<div class="a" style="left:613px;top:377px;width:568px;height:352px;background:#fff;"></div>
<svg class="a" style="left:615px;top:357px" width="16" height="16" viewBox="0 0 16 16" shape-rendering="crispEdges"><rect x="0" y="0" width="16" height="16" fill="#fff"/><rect x="0" y="2" width="14" height="12" fill="#808000"/><rect x="1" y="0" width="5" height="2" fill="#000"/><rect x="6" y="1" width="1" height="1" fill="#000"/><rect x="14" y="2" width="1" height="13" fill="#000"/><rect x="2" y="14" width="13" height="1" fill="#000"/></svg>
<div class="a tbtn" style="left:1082px;top:357px;"></div>
<div class="a tbtn" style="left:1115px;top:357px;"></div>
<div class="a tbtn" style="left:1148px;top:357px;"></div>
<svg class="a" style="left:1082px;top:357px" width="99" height="17" viewBox="0 0 99 17"><rect x="10.5" y="8.5" width="10" height="4" rx="1.6" fill="#ececec" stroke="#363636" stroke-width="1"/><rect x="43.5" y="4.5" width="10" height="8" rx="1.2" fill="#ececec" stroke="#363636" stroke-width="1.15"/><rect x="46.5" y="7.5" width="4" height="2" fill="#f4f4f4" stroke="#2c2c2c" stroke-width="1"/><path d="M78 6.3 L85.5 11.2 M85.5 6.3 L78 11.2" stroke="#363636" stroke-width="3.8" stroke-linecap="round"/><path d="M78 6.3 L85.5 11.2 M85.5 6.3 L78 11.2" stroke="#ececec" stroke-width="1.9" stroke-linecap="round"/></svg>
<div class="t" style="left:635px;top:360px;font-size:12px;line-height:12px;font-weight:normal;color:#434e5a;letter-spacing:0.527px;transform:scaleX(0.893);transform-origin:0 0;">Payment Details</div>
<div class="t" style="left:729px;top:360px;font-size:12px;line-height:12px;font-weight:normal;color:#434e5a;letter-spacing:0.180px;transform:scaleX(0.893);transform-origin:0 0;">( from Bill ( from 1305 PROSPERITY AVE - PROSPERITY HGTS [C...</div>
<div class="a" style="left:616px;top:381px;width:565px;height:85px;background:#808000;"></div>
<div class="a" style="left:711px;top:390px;width:92px;height:17px;background:#fff;"></div>
<div class="a" style="left:711px;top:415px;width:125px;height:17px;background:#fff;"></div>
<div class="a" style="left:711px;top:443px;width:125px;height:18px;background:#fff;"></div>
<div class="a" style="left:919px;top:390px;width:248px;height:17px;background:#fff;"></div>
<div class="a" style="left:919px;top:415px;width:248px;height:17px;background:#fff;"></div>
<div class="a" style="left:919px;top:443px;width:94px;height:18px;background:#fff;"></div>
<div class="a" style="left:1105px;top:443px;width:73px;height:18px;background:#fff;"></div>
<div class="t" style="right:599.437px;top:391px;font-size:14px;line-height:14px;font-weight:normal;color:#000;letter-spacing:-0.437px;">Bill Number:</div>
<div class="t" style="right:599.547px;top:416px;font-size:14px;line-height:14px;font-weight:normal;color:#000;letter-spacing:-0.547px;">Folder RSN:</div>
<div class="t" style="right:599.308px;top:444px;font-size:14px;line-height:14px;font-weight:normal;color:#000;letter-spacing:-0.308px;">Bill Amount:</div>
<div class="t" style="right:399.440px;top:391px;font-size:14px;line-height:14px;font-weight:normal;color:#000;letter-spacing:-0.440px;">Bill Description:</div>
<div class="t" style="right:399.647px;top:416px;font-size:14px;line-height:14px;font-weight:normal;color:#000;letter-spacing:-0.647px;">Name:</div>
<div class="t" style="right:399.357px;top:444px;font-size:14px;line-height:14px;font-weight:normal;color:#000;letter-spacing:-0.357px;">Total Paid:</div>
<div class="t" style="right:205.532px;top:444px;font-size:14px;line-height:14px;font-weight:normal;color:#000;letter-spacing:-0.532px;">Outstanding:</div>
<div class="t" style="left:712px;top:391px;font-size:14px;line-height:14px;font-weight:normal;color:#000;letter-spacing:-0.786px;">1084717</div>
<div class="t" style="left:712px;top:416px;font-size:14px;line-height:14px;font-weight:normal;color:#000;letter-spacing:-0.786px;">1643732</div>
<div class="t" style="left:712px;top:444px;font-size:14px;line-height:14px;font-weight:normal;color:#000;letter-spacing:-0.658px;">$700.00</div>
<div class="t" style="left:919px;top:391px;font-size:14px;line-height:14px;font-weight:normal;color:#000;letter-spacing:-0.590px;">Folder 08 154705 000 00 CO</div>
<div class="t" style="left:919px;top:416px;font-size:14px;line-height:14px;font-weight:normal;color:#000;letter-spacing:-0.648px;">08 154705 000</div>
<div class="t" style="left:919px;top:444px;font-size:14px;line-height:14px;font-weight:normal;color:#000;letter-spacing:-0.658px;">$700.00</div>
<div class="t" style="right:124.607px;top:444px;font-size:14px;line-height:14px;font-weight:normal;color:#000;letter-spacing:-0.607px;">$0.00</div>
<div class="t" style="left:372.697px;width:600px;text-align:center;top:470px;font-size:14px;line-height:14px;font-weight:normal;color:#000;letter-spacing:-0.607px;">Payment</div>
<div class="t" style="left:372.601px;width:600px;text-align:center;top:486px;font-size:14px;line-height:14px;font-weight:normal;color:#000;letter-spacing:-0.799px;">Number</div>
<div class="t" style="left:460.697px;width:600px;text-align:center;top:470px;font-size:14px;line-height:14px;font-weight:normal;color:#000;letter-spacing:-0.607px;">Payment</div>
<div class="t" style="left:460.678px;width:600px;text-align:center;top:486px;font-size:14px;line-height:14px;font-weight:normal;color:#000;letter-spacing:-0.643px;">Date</div>
<div class="t" style="left:547.697px;width:600px;text-align:center;top:470px;font-size:14px;line-height:14px;font-weight:normal;color:#000;letter-spacing:-0.607px;">Payment</div>
<div class="t" style="left:547.609px;width:600px;text-align:center;top:486px;font-size:14px;line-height:14px;font-weight:normal;color:#000;letter-spacing:-0.781px;">Type</div>
<div class="t" style="left:651.739px;width:600px;text-align:center;top:470px;font-size:14px;line-height:14px;font-weight:normal;color:#000;letter-spacing:-0.523px;">Payment Applied</div>
<div class="t" style="left:651.833px;width:600px;text-align:center;top:486px;font-size:14px;line-height:14px;font-weight:normal;color:#000;letter-spacing:-0.334px;">This Bill</div>
<div class="t" style="left:772.738px;width:600px;text-align:center;top:470px;font-size:14px;line-height:14px;font-weight:normal;color:#000;letter-spacing:-0.524px;">Original Payment</div>
<div class="t" style="left:772.622px;width:600px;text-align:center;top:486px;font-size:14px;line-height:14px;font-weight:normal;color:#000;letter-spacing:-0.755px;">Made</div>
<div class="a" style="left:613px;top:503px;width:568px;height:24px;background:#3399ff;"></div>
<div class="t" style="left:636px;top:509px;font-size:14px;line-height:14px;font-weight:normal;color:#fff;letter-spacing:-0.786px;">986154</div>
<div class="t" style="left:721px;top:509px;font-size:14px;line-height:14px;font-weight:normal;color:#fff;letter-spacing:-0.607px;">02/19/2014</div>
<div class="t" style="left:811px;top:509px;font-size:14px;line-height:14px;font-weight:normal;color:#fff;letter-spacing:-0.338px;">ASSESS</div>
<div class="t" style="right:293.658px;top:509px;font-size:14px;line-height:14px;font-weight:normal;color:#fff;letter-spacing:-0.658px;">$700.00</div>
<div class="t" style="right:172.658px;top:509px;font-size:14px;line-height:14px;font-weight:normal;color:#fff;letter-spacing:-0.658px;">$700.00</div>
<div class="t" style="left:636px;top:532px;font-size:14px;line-height:14px;font-weight:normal;color:#000;letter-spacing:-0.786px;">986154</div>
<div class="t" style="left:721px;top:532px;font-size:14px;line-height:14px;font-weight:normal;color:#000;letter-spacing:-0.607px;">03/13/2014</div>
<div class="t" style="left:811px;top:532px;font-size:14px;line-height:14px;font-weight:normal;color:#000;letter-spacing:-0.338px;">ASSESS</div>
<div class="t" style="right:293.659px;top:532px;font-size:14px;line-height:14px;font-weight:normal;color:#000;letter-spacing:-0.659px;">$-700.00</div>
<div class="t" style="right:172.658px;top:532px;font-size:14px;line-height:14px;font-weight:normal;color:#000;letter-spacing:-0.658px;">$700.00</div>
<div class="t" style="left:636px;top:555px;font-size:14px;line-height:14px;font-weight:normal;color:#000;letter-spacing:-0.786px;">989743</div>
<div class="t" style="left:721px;top:555px;font-size:14px;line-height:14px;font-weight:normal;color:#000;letter-spacing:-0.607px;">03/13/2014</div>
<div class="t" style="left:811px;top:555px;font-size:14px;line-height:14px;font-weight:normal;color:#000;letter-spacing:-0.937px;">Check</div>
<div class="t" style="right:293.658px;top:555px;font-size:14px;line-height:14px;font-weight:normal;color:#000;letter-spacing:-0.658px;">$700.00</div>
<div class="t" style="right:172.658px;top:555px;font-size:14px;line-height:14px;font-weight:normal;color:#000;letter-spacing:-0.658px;">$700.00</div>
<div class="a" style="left:625px;top:704px;width:79px;height:25px;background:#f0f0f0;"></div>
<div class="a" style="left:625px;top:704px;width:78px;height:1px;background:#fff;"></div>
<div class="a" style="left:625px;top:704px;width:1px;height:25px;background:#fff;"></div>
<div class="a" style="left:702px;top:705px;width:1px;height:24px;background:#a0a0a0;"></div>
<div class="a" style="left:703px;top:704px;width:1px;height:25px;background:#696969;"></div>
<div class="t" style="left:638px;top:709px;font-size:14px;line-height:14px;font-weight:normal;color:#000;letter-spacing:-0.607px;">Payment</div>
<div class="t" style="left:1010px;top:709px;font-size:14px;line-height:14px;font-weight:normal;color:#0000ff;letter-spacing:-0.786px;">3</div>
<div class="t" style="left:1028px;top:709px;font-size:14px;line-height:14px;font-weight:normal;color:#0000ff;letter-spacing:-0.538px;">Rows Returned</div>
</body></html>
